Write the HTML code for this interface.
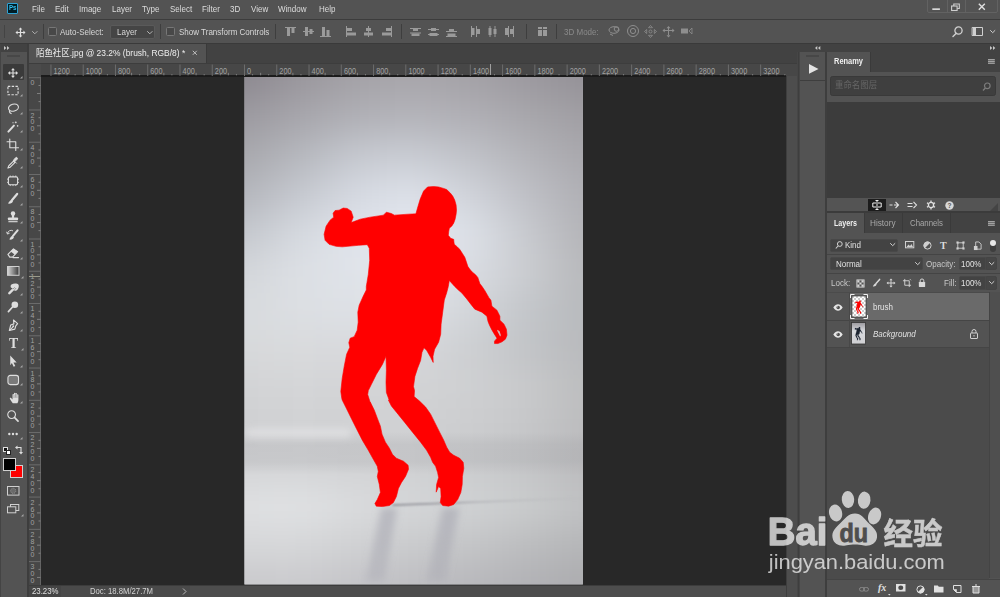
<!DOCTYPE html>
<html lang="en"><head><meta charset="utf-8"><title>Photoshop</title>
<style>
*{box-sizing:border-box;margin:0;padding:0}
html,body{width:1000px;height:597px;overflow:hidden;background:#535353}
body{font-family:"Liberation Sans","Noto Sans CJK SC",sans-serif;font-size:9px;color:#d6d6d6;position:relative}
#app{position:absolute;left:0;top:0;width:1000px;height:597px;overflow:hidden;background:#535353}
.a{position:absolute}
.t{position:absolute;white-space:nowrap;line-height:1;transform-origin:0 0}
svg{position:absolute;overflow:visible}
.ic{fill:none;stroke:#d0d0d0;stroke-width:1;stroke-linecap:round;stroke-linejoin:round}
.icf{fill:#d0d0d0;stroke:none}
.dim{opacity:.55}
</style></head>
<body><div id="app">
<div class="a" style="left:41px;top:77px;width:745px;height:508px;background:#282828;"></div>
<svg style="left:244px;top:76px;overflow:hidden" width="340" height="510" viewBox="0 0 340 510">
<defs>
<filter id="gb" filterUnits="userSpaceOnUse" x="-120" y="-100" width="580" height="710" color-interpolation-filters="sRGB"><feGaussianBlur stdDeviation="23.7 16.4"/></filter>
<filter id="bl" filterUnits="userSpaceOnUse" x="0" y="0" width="338.5" height="507.85"><feGaussianBlur stdDeviation="3.5"/></filter>
<filter id="bl1" filterUnits="userSpaceOnUse" x="0" y="0" width="338.5" height="507.85"><feGaussianBlur stdDeviation="0.9"/></filter>
<filter id="bl2" filterUnits="userSpaceOnUse" x="-20" y="0" width="378.5" height="507.85"><feGaussianBlur stdDeviation="2.5"/></filter>
<linearGradient id="band" gradientUnits="userSpaceOnUse" x1="0" y1="355" x2="0" y2="398">
<stop offset="0" stop-color="#98989c" stop-opacity="0"/>
<stop offset="0.3" stop-color="#98989c" stop-opacity="0.2"/>
<stop offset="0.7" stop-color="#98989c" stop-opacity="0.2"/>
<stop offset="1" stop-color="#98989c" stop-opacity="0"/>
</linearGradient>
<linearGradient id="edgeL" gradientUnits="userSpaceOnUse" x1="0" y1="0" x2="14" y2="0">
<stop offset="0" stop-color="#8a888c" stop-opacity="0.22"/>
<stop offset="1" stop-color="#8a888c" stop-opacity="0"/>
</linearGradient>
<linearGradient id="rf" gradientUnits="userSpaceOnUse" x1="0" y1="430" x2="0" y2="505">
<stop offset="0" stop-color="#a6a6b0" stop-opacity="0.6"/>
<stop offset="0.5" stop-color="#a6a6b0" stop-opacity="0.5"/>
<stop offset="1" stop-color="#a6a6b0" stop-opacity="0.35"/>
</linearGradient>
<linearGradient id="sh" gradientUnits="userSpaceOnUse" x1="150" y1="0" x2="338" y2="0">
<stop offset="0" stop-color="#85858c" stop-opacity="0.9"/>
<stop offset="0.3" stop-color="#8e8e95" stop-opacity="0.8"/>
<stop offset="0.45" stop-color="#a4a4aa" stop-opacity="0.6"/>
<stop offset="0.8" stop-color="#b0b0b5" stop-opacity="0.3"/>
<stop offset="1" stop-color="#b0b0b5" stop-opacity="0.1"/>
</linearGradient>
<clipPath id="imc"><rect width="338.5" height="507.85"/></clipPath>
</defs>
<g transform="translate(0.40 0.65)" clip-path="url(#imc)">
<rect width="338.5" height="507.85" fill="#cfd0d3"/>
<g filter="url(#gb)"><rect x="-141.2" y="-97.6" width="57.1" height="39.6" fill="#8c888f"/><rect x="-84.8" y="-97.6" width="57.1" height="39.6" fill="#8c888f"/><rect x="-28.2" y="-97.6" width="57.1" height="39.6" fill="#8c888f"/><rect x="28.2" y="-97.6" width="57.1" height="39.6" fill="#9a979d"/><rect x="84.8" y="-97.6" width="57.1" height="39.6" fill="#a4a2a7"/><rect x="141.2" y="-97.6" width="57.1" height="39.6" fill="#a8a6ab"/><rect x="197.8" y="-97.6" width="57.1" height="39.6" fill="#a4a2a7"/><rect x="254.2" y="-97.6" width="57.1" height="39.6" fill="#9c999f"/><rect x="310.8" y="-97.6" width="57.1" height="39.6" fill="#949197"/><rect x="367.2" y="-97.6" width="57.1" height="39.6" fill="#949197"/><rect x="423.8" y="-97.6" width="57.1" height="39.6" fill="#949197"/><rect x="-141.2" y="-58.6" width="57.1" height="39.6" fill="#8c888f"/><rect x="-84.8" y="-58.6" width="57.1" height="39.6" fill="#8c888f"/><rect x="-28.2" y="-58.6" width="57.1" height="39.6" fill="#8c888f"/><rect x="28.2" y="-58.6" width="57.1" height="39.6" fill="#9a979d"/><rect x="84.8" y="-58.6" width="57.1" height="39.6" fill="#a4a2a7"/><rect x="141.2" y="-58.6" width="57.1" height="39.6" fill="#a8a6ab"/><rect x="197.8" y="-58.6" width="57.1" height="39.6" fill="#a4a2a7"/><rect x="254.2" y="-58.6" width="57.1" height="39.6" fill="#9c999f"/><rect x="310.8" y="-58.6" width="57.1" height="39.6" fill="#949197"/><rect x="367.2" y="-58.6" width="57.1" height="39.6" fill="#949197"/><rect x="423.8" y="-58.6" width="57.1" height="39.6" fill="#949197"/><rect x="-141.2" y="-19.5" width="57.1" height="39.6" fill="#8c888f"/><rect x="-84.8" y="-19.5" width="57.1" height="39.6" fill="#8c888f"/><rect x="-28.2" y="-19.5" width="57.1" height="39.6" fill="#8c888f"/><rect x="28.2" y="-19.5" width="57.1" height="39.6" fill="#9a979d"/><rect x="84.8" y="-19.5" width="57.1" height="39.6" fill="#a4a2a7"/><rect x="141.2" y="-19.5" width="57.1" height="39.6" fill="#a8a6ab"/><rect x="197.8" y="-19.5" width="57.1" height="39.6" fill="#a4a2a7"/><rect x="254.2" y="-19.5" width="57.1" height="39.6" fill="#9c999f"/><rect x="310.8" y="-19.5" width="57.1" height="39.6" fill="#949197"/><rect x="367.2" y="-19.5" width="57.1" height="39.6" fill="#949197"/><rect x="423.8" y="-19.5" width="57.1" height="39.6" fill="#949197"/><rect x="-141.2" y="19.5" width="57.1" height="39.6" fill="#9c9aa0"/><rect x="-84.8" y="19.5" width="57.1" height="39.6" fill="#9c9aa0"/><rect x="-28.2" y="19.5" width="57.1" height="39.6" fill="#9c9aa0"/><rect x="28.2" y="19.5" width="57.1" height="39.6" fill="#a7a6ac"/><rect x="84.8" y="19.5" width="57.1" height="39.6" fill="#b0b0b6"/><rect x="141.2" y="19.5" width="57.1" height="39.6" fill="#b4b4ba"/><rect x="197.8" y="19.5" width="57.1" height="39.6" fill="#b0afb5"/><rect x="254.2" y="19.5" width="57.1" height="39.6" fill="#a8a7ac"/><rect x="310.8" y="19.5" width="57.1" height="39.6" fill="#a19fa4"/><rect x="367.2" y="19.5" width="57.1" height="39.6" fill="#a19fa4"/><rect x="423.8" y="19.5" width="57.1" height="39.6" fill="#a19fa4"/><rect x="-141.2" y="58.6" width="57.1" height="39.6" fill="#a8a8ad"/><rect x="-84.8" y="58.6" width="57.1" height="39.6" fill="#a8a8ad"/><rect x="-28.2" y="58.6" width="57.1" height="39.6" fill="#a8a8ad"/><rect x="28.2" y="58.6" width="57.1" height="39.6" fill="#b6b8be"/><rect x="84.8" y="58.6" width="57.1" height="39.6" fill="#c6c9d0"/><rect x="141.2" y="58.6" width="57.1" height="39.6" fill="#c9ccd3"/><rect x="197.8" y="58.6" width="57.1" height="39.6" fill="#c0c2c8"/><rect x="254.2" y="58.6" width="57.1" height="39.6" fill="#b4b4b9"/><rect x="310.8" y="58.6" width="57.1" height="39.6" fill="#a9a8ad"/><rect x="367.2" y="58.6" width="57.1" height="39.6" fill="#a9a8ad"/><rect x="423.8" y="58.6" width="57.1" height="39.6" fill="#a9a8ad"/><rect x="-141.2" y="97.6" width="57.1" height="39.6" fill="#b4b6bc"/><rect x="-84.8" y="97.6" width="57.1" height="39.6" fill="#b4b6bc"/><rect x="-28.2" y="97.6" width="57.1" height="39.6" fill="#b4b6bc"/><rect x="28.2" y="97.6" width="57.1" height="39.6" fill="#c6c9d0"/><rect x="84.8" y="97.6" width="57.1" height="39.6" fill="#d6dae2"/><rect x="141.2" y="97.6" width="57.1" height="39.6" fill="#dde1e9"/><rect x="197.8" y="97.6" width="57.1" height="39.6" fill="#d0d3da"/><rect x="254.2" y="97.6" width="57.1" height="39.6" fill="#bfc0c6"/><rect x="310.8" y="97.6" width="57.1" height="39.6" fill="#b0b0b5"/><rect x="367.2" y="97.6" width="57.1" height="39.6" fill="#b0b0b5"/><rect x="423.8" y="97.6" width="57.1" height="39.6" fill="#b0b0b5"/><rect x="-141.2" y="136.7" width="57.1" height="39.6" fill="#c4c7cd"/><rect x="-84.8" y="136.7" width="57.1" height="39.6" fill="#c4c7cd"/><rect x="-28.2" y="136.7" width="57.1" height="39.6" fill="#c4c7cd"/><rect x="28.2" y="136.7" width="57.1" height="39.6" fill="#d6dae0"/><rect x="84.8" y="136.7" width="57.1" height="39.6" fill="#e0e4ec"/><rect x="141.2" y="136.7" width="57.1" height="39.6" fill="#e4e8f0"/><rect x="197.8" y="136.7" width="57.1" height="39.6" fill="#dde1e8"/><rect x="254.2" y="136.7" width="57.1" height="39.6" fill="#c8cacf"/><rect x="310.8" y="136.7" width="57.1" height="39.6" fill="#b4b4b8"/><rect x="367.2" y="136.7" width="57.1" height="39.6" fill="#b4b4b8"/><rect x="423.8" y="136.7" width="57.1" height="39.6" fill="#b4b4b8"/><rect x="-141.2" y="175.7" width="57.1" height="39.6" fill="#d3d6da"/><rect x="-84.8" y="175.7" width="57.1" height="39.6" fill="#d3d6da"/><rect x="-28.2" y="175.7" width="57.1" height="39.6" fill="#d3d6da"/><rect x="28.2" y="175.7" width="57.1" height="39.6" fill="#dde0e5"/><rect x="84.8" y="175.7" width="57.1" height="39.6" fill="#e0e4ea"/><rect x="141.2" y="175.7" width="57.1" height="39.6" fill="#e2e6ec"/><rect x="197.8" y="175.7" width="57.1" height="39.6" fill="#d9dce2"/><rect x="254.2" y="175.7" width="57.1" height="39.6" fill="#cbcdd1"/><rect x="310.8" y="175.7" width="57.1" height="39.6" fill="#b8b9bc"/><rect x="367.2" y="175.7" width="57.1" height="39.6" fill="#b8b9bc"/><rect x="423.8" y="175.7" width="57.1" height="39.6" fill="#b8b9bc"/><rect x="-141.2" y="214.8" width="57.1" height="39.6" fill="#d8dbde"/><rect x="-84.8" y="214.8" width="57.1" height="39.6" fill="#d8dbde"/><rect x="-28.2" y="214.8" width="57.1" height="39.6" fill="#d8dbde"/><rect x="28.2" y="214.8" width="57.1" height="39.6" fill="#dcdfe3"/><rect x="84.8" y="214.8" width="57.1" height="39.6" fill="#dee1e6"/><rect x="141.2" y="214.8" width="57.1" height="39.6" fill="#dde0e5"/><rect x="197.8" y="214.8" width="57.1" height="39.6" fill="#d3d6da"/><rect x="254.2" y="214.8" width="57.1" height="39.6" fill="#c3c6ca"/><rect x="310.8" y="214.8" width="57.1" height="39.6" fill="#b8babd"/><rect x="367.2" y="214.8" width="57.1" height="39.6" fill="#b8babd"/><rect x="423.8" y="214.8" width="57.1" height="39.6" fill="#b8babd"/><rect x="-141.2" y="253.8" width="57.1" height="39.6" fill="#d7d9db"/><rect x="-84.8" y="253.8" width="57.1" height="39.6" fill="#d7d9db"/><rect x="-28.2" y="253.8" width="57.1" height="39.6" fill="#d7d9db"/><rect x="28.2" y="253.8" width="57.1" height="39.6" fill="#d9dadc"/><rect x="84.8" y="253.8" width="57.1" height="39.6" fill="#d8d9dc"/><rect x="141.2" y="253.8" width="57.1" height="39.6" fill="#d6d7da"/><rect x="197.8" y="253.8" width="57.1" height="39.6" fill="#cdcfd2"/><rect x="254.2" y="253.8" width="57.1" height="39.6" fill="#c2c4c7"/><rect x="310.8" y="253.8" width="57.1" height="39.6" fill="#b9babd"/><rect x="367.2" y="253.8" width="57.1" height="39.6" fill="#b9babd"/><rect x="423.8" y="253.8" width="57.1" height="39.6" fill="#b9babd"/><rect x="-141.2" y="292.9" width="57.1" height="39.6" fill="#d2d3d5"/><rect x="-84.8" y="292.9" width="57.1" height="39.6" fill="#d2d3d5"/><rect x="-28.2" y="292.9" width="57.1" height="39.6" fill="#d2d3d5"/><rect x="28.2" y="292.9" width="57.1" height="39.6" fill="#d4d5d7"/><rect x="84.8" y="292.9" width="57.1" height="39.6" fill="#d3d4d6"/><rect x="141.2" y="292.9" width="57.1" height="39.6" fill="#d2d3d5"/><rect x="197.8" y="292.9" width="57.1" height="39.6" fill="#cfd0d2"/><rect x="254.2" y="292.9" width="57.1" height="39.6" fill="#c9cacc"/><rect x="310.8" y="292.9" width="57.1" height="39.6" fill="#bdbebf"/><rect x="367.2" y="292.9" width="57.1" height="39.6" fill="#bdbebf"/><rect x="423.8" y="292.9" width="57.1" height="39.6" fill="#bdbebf"/><rect x="-141.2" y="331.9" width="57.1" height="39.6" fill="#cfd0d2"/><rect x="-84.8" y="331.9" width="57.1" height="39.6" fill="#cfd0d2"/><rect x="-28.2" y="331.9" width="57.1" height="39.6" fill="#cfd0d2"/><rect x="28.2" y="331.9" width="57.1" height="39.6" fill="#d1d2d4"/><rect x="84.8" y="331.9" width="57.1" height="39.6" fill="#d0d1d3"/><rect x="141.2" y="331.9" width="57.1" height="39.6" fill="#d0d1d3"/><rect x="197.8" y="331.9" width="57.1" height="39.6" fill="#cccdcf"/><rect x="254.2" y="331.9" width="57.1" height="39.6" fill="#c6c7c9"/><rect x="310.8" y="331.9" width="57.1" height="39.6" fill="#bcbcbe"/><rect x="367.2" y="331.9" width="57.1" height="39.6" fill="#bcbcbe"/><rect x="423.8" y="331.9" width="57.1" height="39.6" fill="#bcbcbe"/><rect x="-141.2" y="371.0" width="57.1" height="39.6" fill="#d4d5d7"/><rect x="-84.8" y="371.0" width="57.1" height="39.6" fill="#d4d5d7"/><rect x="-28.2" y="371.0" width="57.1" height="39.6" fill="#d4d5d7"/><rect x="28.2" y="371.0" width="57.1" height="39.6" fill="#d4d5d7"/><rect x="84.8" y="371.0" width="57.1" height="39.6" fill="#d2d3d5"/><rect x="141.2" y="371.0" width="57.1" height="39.6" fill="#d0d1d3"/><rect x="197.8" y="371.0" width="57.1" height="39.6" fill="#cbccce"/><rect x="254.2" y="371.0" width="57.1" height="39.6" fill="#c5c6c8"/><rect x="310.8" y="371.0" width="57.1" height="39.6" fill="#bbbbbd"/><rect x="367.2" y="371.0" width="57.1" height="39.6" fill="#bbbbbd"/><rect x="423.8" y="371.0" width="57.1" height="39.6" fill="#bbbbbd"/><rect x="-141.2" y="410.0" width="57.1" height="39.6" fill="#dfe0e2"/><rect x="-84.8" y="410.0" width="57.1" height="39.6" fill="#dfe0e2"/><rect x="-28.2" y="410.0" width="57.1" height="39.6" fill="#dfe0e2"/><rect x="28.2" y="410.0" width="57.1" height="39.6" fill="#e0e2e4"/><rect x="84.8" y="410.0" width="57.1" height="39.6" fill="#dadbdd"/><rect x="141.2" y="410.0" width="57.1" height="39.6" fill="#d4d6d8"/><rect x="197.8" y="410.0" width="57.1" height="39.6" fill="#d0d2d4"/><rect x="254.2" y="410.0" width="57.1" height="39.6" fill="#cacccd"/><rect x="310.8" y="410.0" width="57.1" height="39.6" fill="#c0c1c3"/><rect x="367.2" y="410.0" width="57.1" height="39.6" fill="#c0c1c3"/><rect x="423.8" y="410.0" width="57.1" height="39.6" fill="#c0c1c3"/><rect x="-141.2" y="449.1" width="57.1" height="39.6" fill="#d6d7d9"/><rect x="-84.8" y="449.1" width="57.1" height="39.6" fill="#d6d7d9"/><rect x="-28.2" y="449.1" width="57.1" height="39.6" fill="#d6d7d9"/><rect x="28.2" y="449.1" width="57.1" height="39.6" fill="#d6d7d9"/><rect x="84.8" y="449.1" width="57.1" height="39.6" fill="#d0d1d3"/><rect x="141.2" y="449.1" width="57.1" height="39.6" fill="#cacbcd"/><rect x="197.8" y="449.1" width="57.1" height="39.6" fill="#c4c5c7"/><rect x="254.2" y="449.1" width="57.1" height="39.6" fill="#bcbdbf"/><rect x="310.8" y="449.1" width="57.1" height="39.6" fill="#b5b6b8"/><rect x="367.2" y="449.1" width="57.1" height="39.6" fill="#b5b6b8"/><rect x="423.8" y="449.1" width="57.1" height="39.6" fill="#b5b6b8"/><rect x="-141.2" y="488.1" width="57.1" height="39.6" fill="#c9c9cc"/><rect x="-84.8" y="488.1" width="57.1" height="39.6" fill="#c9c9cc"/><rect x="-28.2" y="488.1" width="57.1" height="39.6" fill="#c9c9cc"/><rect x="28.2" y="488.1" width="57.1" height="39.6" fill="#cacacd"/><rect x="84.8" y="488.1" width="57.1" height="39.6" fill="#c4c4c8"/><rect x="141.2" y="488.1" width="57.1" height="39.6" fill="#bebec2"/><rect x="197.8" y="488.1" width="57.1" height="39.6" fill="#b8b8bc"/><rect x="254.2" y="488.1" width="57.1" height="39.6" fill="#b2b2b6"/><rect x="310.8" y="488.1" width="57.1" height="39.6" fill="#acacaf"/><rect x="367.2" y="488.1" width="57.1" height="39.6" fill="#acacaf"/><rect x="423.8" y="488.1" width="57.1" height="39.6" fill="#acacaf"/><rect x="-141.2" y="527.2" width="57.1" height="39.6" fill="#c9c9cc"/><rect x="-84.8" y="527.2" width="57.1" height="39.6" fill="#c9c9cc"/><rect x="-28.2" y="527.2" width="57.1" height="39.6" fill="#c9c9cc"/><rect x="28.2" y="527.2" width="57.1" height="39.6" fill="#cacacd"/><rect x="84.8" y="527.2" width="57.1" height="39.6" fill="#c4c4c8"/><rect x="141.2" y="527.2" width="57.1" height="39.6" fill="#bebec2"/><rect x="197.8" y="527.2" width="57.1" height="39.6" fill="#b8b8bc"/><rect x="254.2" y="527.2" width="57.1" height="39.6" fill="#b2b2b6"/><rect x="310.8" y="527.2" width="57.1" height="39.6" fill="#acacaf"/><rect x="367.2" y="527.2" width="57.1" height="39.6" fill="#acacaf"/><rect x="423.8" y="527.2" width="57.1" height="39.6" fill="#acacaf"/><rect x="-141.2" y="566.2" width="57.1" height="39.6" fill="#c9c9cc"/><rect x="-84.8" y="566.2" width="57.1" height="39.6" fill="#c9c9cc"/><rect x="-28.2" y="566.2" width="57.1" height="39.6" fill="#c9c9cc"/><rect x="28.2" y="566.2" width="57.1" height="39.6" fill="#cacacd"/><rect x="84.8" y="566.2" width="57.1" height="39.6" fill="#c4c4c8"/><rect x="141.2" y="566.2" width="57.1" height="39.6" fill="#bebec2"/><rect x="197.8" y="566.2" width="57.1" height="39.6" fill="#b8b8bc"/><rect x="254.2" y="566.2" width="57.1" height="39.6" fill="#b2b2b6"/><rect x="310.8" y="566.2" width="57.1" height="39.6" fill="#acacaf"/><rect x="367.2" y="566.2" width="57.1" height="39.6" fill="#acacaf"/><rect x="423.8" y="566.2" width="57.1" height="39.6" fill="#acacaf"/></g>
<rect width="338.5" height="507.85" fill="url(#band)"/>
<rect x="2" y="352" width="104" height="9" fill="#e6e6e8" opacity="0.6" filter="url(#bl)"/>
<path d="M148 428.500L338 421.500" stroke="url(#sh)" stroke-width="1.600" filter="url(#bl1)" fill="none"/>
<path d="M137 431h16l-13 74h-19z" fill="url(#rf)" filter="url(#bl)"/>
<path d="M198 431h17l-14 74h-19z" fill="url(#rf)" filter="url(#bl)"/>
<path d="M183.2,110.3 L189.2,109.9 L194.2,110.3 L199.3,111.8 L202.3,112.9 L205.9,116.4 L208.3,119.4 L210.3,123.4 L211.7,128.4 L212.1,133.5 L211.7,137.5 L210.7,142.5 L209.3,146.5 L207.3,149.5 L204.9,151.5 L204.3,155.2 L203.9,158.7 L206.3,161.7 L209.3,162.7 L209.5,165.2 L209.9,167.7 L212.7,170.0 L215.3,172.7 L218.0,176.8 L220.4,180.7 L222.0,185.3 L223.4,189.7 L225.8,193.2 L228.4,195.8 L231.2,198.2 L233.4,200.8 L234.4,203.8 L235.4,206.8 L237.9,210.2 L240.5,214.0 L242.5,217.5 L244.5,221.0 L246.5,223.5 L247.5,229.5 L252.5,233.5 L255.5,239.5 L255.5,243.5 L259.6,247.5 L262.0,252.5 L262.6,258.5 L261.0,262.5 L257.6,265.2 L253.5,266.9 L250.1,266.9 L250.1,264.5 L252.6,261.5 L250.6,258.5 L247.6,253.5 L245.1,248.5 L243.6,244.8 L242.5,239.5 L237.5,235.5 L230.4,232.5 L226.4,227.5 L222.4,222.3 L217.4,216.3 L213.9,213.3 L210.3,209.8 L204.9,203.8 L203.9,209.8 L202.3,216.0 L199.9,223.3 L198.3,235.5 L196.7,247.5 L196.3,257.5 L194.2,265.6 L190.2,272.6 L188.6,279.6 L188.8,285.8 L186.2,280.6 L182.2,273.6 L179.6,271.2 L177.6,275.6 L176.2,283.8 L173.1,291.8 L170.5,299.8 L169.1,309.9 L170.1,313.9 L169.7,319.9 L175.1,324.4 L181.2,330.4 L186.2,337.5 L190.2,345.5 L195.2,355.5 L199.3,363.5 L202.3,370.5 L205.3,375.6 L209.3,378.6 L215.3,381.6 L218.8,385.6 L219.4,391.6 L218.0,399.8 L217.8,407.8 L216.4,415.9 L213.3,422.9 L209.3,427.9 L204.3,429.5 L198.3,428.9 L195.9,425.9 L196.7,419.9 L196.3,411.8 L194.2,409.8 L191.8,415.5 L192.2,407.8 L194.2,400.8 L193.2,395.8 L191.2,389.6 L188.2,385.6 L186.2,380.6 L182.2,373.6 L176.2,365.5 L168.1,355.5 L160.1,345.5 L152.0,335.5 L147.0,329.4 L144.0,323.4 L145.0,324.0 L142.0,315.9 L141.6,305.9 L142.0,293.8 L141.6,279.6 L138.0,287.8 L131.9,297.8 L126.9,307.9 L123.9,313.9 L123.3,317.9 L125.9,326.0 L125.9,325.4 L129.9,333.5 L132.9,341.5 L136.0,349.5 L137.6,357.5 L141.0,365.5 L145.0,371.5 L148.0,377.6 L152.0,381.6 L159.1,384.6 L163.7,388.6 L164.1,392.6 L161.1,399.8 L157.1,405.8 L154.0,411.8 L152.0,419.9 L149.0,425.9 L145.0,428.9 L138.0,429.9 L131.9,429.5 L130.5,426.9 L132.9,422.9 L136.0,415.9 L134.9,407.8 L132.9,399.8 L133.9,394.8 L132.9,389.6 L128.9,382.6 L123.9,373.6 L117.9,363.5 L111.8,351.5 L106.8,341.5 L101.8,331.4 L97.8,323.4 L97.4,321.9 L96.4,314.9 L97.8,301.8 L99.8,289.8 L102.2,277.6 L105.4,270.6 L104.4,266.0 L105.8,261.5 L109.8,260.0 L112.8,253.5 L113.8,245.5 L113.4,235.5 L114.8,228.5 L118.9,219.3 L121.9,213.3 L121.9,209.8 L123.9,197.8 L125.3,183.7 L124.9,171.7 L122.9,168.0 L113.8,168.7 L97.8,170.2 L91.7,169.7 L84.7,167.7 L80.7,163.7 L79.7,157.7 L81.7,149.5 L85.7,143.5 L89.3,140.5 L88.7,136.5 L90.7,133.9 L94.7,133.5 L98.8,131.4 L102.8,131.8 L106.8,134.5 L108.8,140.5 L106.8,145.9 L108.8,145.2 L115.9,142.5 L125.9,140.5 L139.0,138.5 L142.0,135.5 L147.0,136.9 L150.0,138.5 L164.1,137.5 L171.5,137.2 L173.1,131.4 L175.8,122.4 L179.2,114.4Z" fill="#ff0000" stroke="#ff0000" stroke-width="0.6" stroke-linejoin="round"/>
<path d="M253.1,253.0 L255.2,254.5 L256.5,258.5 L255.7,259.8 L254.2,256.8 L252.8,254.2Z" fill="#d0d3d8" opacity="0.85"/>
</g>
</svg>
<div class="a" style="left:0px;top:0px;width:1000px;height:19px;background:#535353;"></div>
<div class="a" style="left:0px;top:19px;width:1000px;height:1px;background:#3c3c3c;"></div>
<div class="a" style="left:7px;top:3px;width:11px;height:11px;background:#001d26;border:1px solid #2fa3d6;border-radius:1px"></div>
<span class="t" style="left:9.3px;top:5.3px;font-size:6.5px;color:#35c0f0;transform:scaleX(0.950);font-weight:bold">Ps</span>
<span class="t" style="left:32px;top:4.5px;font-size:9px;color:#dcdcdc;transform:scaleX(0.890);">File</span>
<span class="t" style="left:55px;top:4.5px;font-size:9px;color:#dcdcdc;transform:scaleX(0.890);">Edit</span>
<span class="t" style="left:79px;top:4.5px;font-size:9px;color:#dcdcdc;transform:scaleX(0.890);">Image</span>
<span class="t" style="left:112px;top:4.5px;font-size:9px;color:#dcdcdc;transform:scaleX(0.890);">Layer</span>
<span class="t" style="left:142px;top:4.5px;font-size:9px;color:#dcdcdc;transform:scaleX(0.890);">Type</span>
<span class="t" style="left:169.5px;top:4.5px;font-size:9px;color:#dcdcdc;transform:scaleX(0.890);">Select</span>
<span class="t" style="left:201.5px;top:4.5px;font-size:9px;color:#dcdcdc;transform:scaleX(0.890);">Filter</span>
<span class="t" style="left:230px;top:4.5px;font-size:9px;color:#dcdcdc;transform:scaleX(0.890);">3D</span>
<span class="t" style="left:250.5px;top:4.5px;font-size:9px;color:#dcdcdc;transform:scaleX(0.890);">View</span>
<span class="t" style="left:278px;top:4.5px;font-size:9px;color:#dcdcdc;transform:scaleX(0.890);">Window</span>
<span class="t" style="left:318.5px;top:4.5px;font-size:9px;color:#dcdcdc;transform:scaleX(0.890);">Help</span>
<div class="a" style="left:926.5px;top:-2px;width:71.5px;height:14.5px;background:transparent;border:1px solid #626262;border-radius:2px"></div>
<div class="a" style="left:946.5px;top:0px;width:1px;height:12px;background:#626262;"></div>
<div class="a" style="left:965px;top:0px;width:1px;height:12px;background:#626262;"></div>
<svg style="left:932px;top:7.5px;" width="9" height="3" viewBox="0 0 9 3"><rect x="0.300" y="0.300" width="7.600" height="1.700" fill="#d8d8d8"/></svg>
<svg style="left:951px;top:3px;" width="10" height="9" viewBox="0 0 10 9"><rect x="0.600" y="3" width="5.500" height="4.500" fill="none" stroke="#cfcfcf" stroke-width="1.100"/><path d="M2.800 3V1h5.500v4.500H6.200" fill="none" stroke="#cfcfcf" stroke-width="1.100"/></svg>
<svg style="left:977.5px;top:2.5px;" width="8" height="8" viewBox="0 0 8 8"><path d="M0.800 0.800l6 6M6.800 0.800l-6 6" fill="none" stroke="#e0e0e0" stroke-width="1.400"/></svg>
<div class="a" style="left:0px;top:20px;width:1000px;height:23px;background:#535353;"></div>
<div class="a" style="left:0px;top:43px;width:1000px;height:1px;background:#3a3a3a;"></div>
<div class="a" style="left:4px;top:25px;width:1px;height:13px;background:#444;"></div>
<svg style="left:14.5px;top:26.5px;" width="11" height="11" viewBox="0 0 11 11"><path d="M5.5 0.5L3.6 2.6h1.3v2.3H2.6V3.6L0.5 5.5l2.1 1.9V6.1h2.3v2.3H3.6L5.5 10.5l1.9-2.1H6.1V6.1h2.3v1.3l2.1-1.9-2.1-1.9v1.3H6.1V2.6h1.3z" fill="#e0e0e0"/></svg>
<svg style="left:31.5px;top:30.5px;" width="6" height="4" viewBox="0 0 6 4"><path d="M0.5 0.5l2.3 2.3 2.3-2.3" class="ic" style="stroke:#b0b0b0"/></svg>
<div class="a" style="left:43px;top:24px;width:1px;height:15px;background:#3e3e3e;"></div>
<div class="a" style="left:48px;top:27px;width:9px;height:9px;background:#484848;border:1px solid #777;border-radius:1.5px"></div>
<span class="t" style="left:60px;top:27.5px;font-size:9px;color:#d8d8d8;transform:scaleX(0.890);">Auto-Select:</span>
<div class="a" style="left:110.3px;top:25px;width:44.5px;height:14px;background:#454545;border:1px solid #5a5a5a;border-radius:2px"></div>
<div class="a" style="left:160px;top:24px;width:1px;height:15px;background:#3e3e3e;"></div>
<span class="t" style="left:117px;top:27.5px;font-size:9px;color:#d8d8d8;transform:scaleX(0.890);">Layer</span>
<svg style="left:146.5px;top:30.5px;" width="6" height="4" viewBox="0 0 6 4"><path d="M0.5 0.5l2.3 2.3 2.3-2.3" class="ic" style="stroke:#b8b8b8"/></svg>
<div class="a" style="left:166px;top:27px;width:9px;height:9px;background:#484848;border:1px solid #777;border-radius:1.5px"></div>
<span class="t" style="left:179px;top:27.5px;font-size:9px;color:#d8d8d8;transform:scaleX(0.890);">Show Transform Controls</span>
<div class="a" style="left:275px;top:24px;width:1px;height:15px;background:#3e3e3e;"></div>
<div class="a" style="left:401px;top:24px;width:1px;height:15px;background:#3e3e3e;"></div>
<div class="a" style="left:526px;top:24px;width:1px;height:15px;background:#3e3e3e;"></div>
<div class="a" style="left:556px;top:24px;width:1px;height:15px;background:#3e3e3e;"></div>
<svg style="left:285px;top:25.7px;" width="12" height="12" viewBox="0 0 12 12"><rect x="0" y="1" width="11" height="1" fill="#9a9a9a"/><rect x="2" y="2" width="3" height="8" fill="#9a9a9a"/><rect x="6.5" y="2" width="3" height="5" fill="#9a9a9a"/></svg>
<svg style="left:303px;top:25.7px;" width="12" height="12" viewBox="0 0 12 12"><rect x="0" y="5" width="11" height="1" fill="#9a9a9a"/><rect x="2" y="1" width="3" height="9" fill="#9a9a9a"/><rect x="6.5" y="3" width="3" height="5" fill="#9a9a9a"/></svg>
<svg style="left:320px;top:25.7px;" width="12" height="12" viewBox="0 0 12 12"><rect x="0" y="10" width="11" height="1" fill="#9a9a9a"/><rect x="2" y="1" width="3" height="9" fill="#9a9a9a"/><rect x="6.5" y="4" width="3" height="6" fill="#9a9a9a"/></svg>
<svg style="left:346px;top:25.7px;" width="12" height="12" viewBox="0 0 12 12"><rect x="0" y="0" width="1" height="11" fill="#9a9a9a"/><rect x="1" y="2" width="5" height="3" fill="#9a9a9a"/><rect x="1" y="6.5" width="9" height="3" fill="#9a9a9a"/></svg>
<svg style="left:363px;top:25.7px;" width="12" height="12" viewBox="0 0 12 12"><rect x="5" y="0" width="1" height="11" fill="#9a9a9a"/><rect x="3" y="2" width="5" height="3" fill="#9a9a9a"/><rect x="1" y="6.5" width="9" height="3" fill="#9a9a9a"/></svg>
<svg style="left:381px;top:25.7px;" width="12" height="12" viewBox="0 0 12 12"><rect x="10" y="0" width="1" height="11" fill="#9a9a9a"/><rect x="5" y="2" width="5" height="3" fill="#9a9a9a"/><rect x="1" y="6.5" width="9" height="3" fill="#9a9a9a"/></svg>
<svg style="left:410px;top:25.7px;" width="12" height="12" viewBox="0 0 12 12"><rect x="0" y="2" width="11" height="1" fill="#9a9a9a"/><rect x="3" y="3" width="5" height="2" fill="#9a9a9a"/><rect x="0" y="6.5" width="11" height="1" fill="#9a9a9a"/><rect x="1.5" y="7.5" width="8" height="2.5" fill="#9a9a9a"/></svg>
<svg style="left:428px;top:25.7px;" width="12" height="12" viewBox="0 0 12 12"><rect x="0" y="3" width="11" height="1" fill="#9a9a9a"/><rect x="3" y="2" width="5" height="3" fill="#9a9a9a"/><rect x="0" y="8" width="11" height="1" fill="#9a9a9a"/><rect x="1.5" y="7" width="8" height="3" fill="#9a9a9a"/></svg>
<svg style="left:446px;top:25.7px;" width="12" height="12" viewBox="0 0 12 12"><rect x="0" y="5" width="11" height="1" fill="#9a9a9a"/><rect x="3" y="3" width="5" height="2" fill="#9a9a9a"/><rect x="0" y="10" width="11" height="1" fill="#9a9a9a"/><rect x="1.5" y="7.5" width="8" height="2.5" fill="#9a9a9a"/></svg>
<svg style="left:470px;top:25.7px;" width="12" height="12" viewBox="0 0 12 12"><rect x="1" y="0" width="1" height="11" fill="#9a9a9a"/><rect x="2" y="2" width="2.5" height="7" fill="#9a9a9a"/><rect x="6" y="0" width="1" height="11" fill="#9a9a9a"/><rect x="7" y="3" width="3" height="5" fill="#9a9a9a"/></svg>
<svg style="left:487px;top:25.7px;" width="12" height="12" viewBox="0 0 12 12"><rect x="2.5" y="0" width="1" height="11" fill="#9a9a9a"/><rect x="1.5" y="2" width="3" height="7" fill="#9a9a9a"/><rect x="7.5" y="0" width="1" height="11" fill="#9a9a9a"/><rect x="6.5" y="3" width="3" height="5" fill="#9a9a9a"/></svg>
<svg style="left:504px;top:25.7px;" width="12" height="12" viewBox="0 0 12 12"><rect x="4" y="0" width="1" height="11" fill="#9a9a9a"/><rect x="1" y="2" width="3" height="7" fill="#9a9a9a"/><rect x="9" y="0" width="1" height="11" fill="#9a9a9a"/><rect x="6" y="3" width="3" height="5" fill="#9a9a9a"/></svg>
<svg style="left:538px;top:25.7px;" width="12" height="12" viewBox="0 0 12 12"><rect x="0" y="1" width="4" height="2" fill="#9a9a9a"/><rect x="5" y="1" width="4" height="2" fill="#9a9a9a"/><rect x="0" y="4" width="4" height="6" fill="#9a9a9a"/><rect x="5" y="4" width="4" height="6" fill="#9a9a9a"/></svg>
<span class="t" style="left:564px;top:27.5px;font-size:9px;color:#8a8a8a;transform:scaleX(0.890);">3D Mode:</span>
<svg style="left:608px;top:25px;" width="13" height="12" viewBox="0 0 13 12"><ellipse cx="6" cy="5" rx="5" ry="3.3" fill="none" stroke="#8e8e8e"/><circle cx="8.5" cy="4" r="2.3" fill="none" stroke="#8e8e8e"/><path d="M2 9l3 1.5" stroke="#8e8e8e"/></svg>
<svg style="left:626px;top:24px;" width="14" height="14" viewBox="0 0 14 14"><circle cx="7" cy="7" r="5.5" fill="none" stroke="#8e8e8e"/><circle cx="7" cy="7" r="2.6" fill="none" stroke="#8e8e8e"/></svg>
<svg style="left:644px;top:25px;" width="13" height="13" viewBox="0 0 13 13"><path d="M6.5 0.5l2 2.2h-4zM6.5 12.5l2-2.2h-4zM0.5 6.5l2.2-2v4zM12.5 6.5l-2.2-2v4z" fill="none" stroke="#8e8e8e" stroke-width=".8"/><circle cx="6.5" cy="6.5" r="1.5" fill="none" stroke="#8e8e8e" stroke-width=".8"/></svg>
<svg style="left:662px;top:25px;" width="13" height="13" viewBox="0 0 13 13"><path d="M6.5 1l2 2.2h-4zM6.5 12.5l2-2.2h-4zM0.5 5.5l2.2-2v4zM12.5 5.5l-2.2-2v4z" fill="#8e8e8e"/><path d="M6.5 3v7M2 5.5h9" stroke="#8e8e8e"/></svg>
<svg style="left:681px;top:27px;" width="13" height="9" viewBox="0 0 13 9"><rect x="0" y="1.5" width="7" height="5" fill="#8e8e8e"/><path d="M8 4l3-3v6z" fill="none" stroke="#8e8e8e" stroke-width=".8"/></svg>
<svg style="left:952px;top:26px;" width="12" height="12" viewBox="0 0 12 12"><circle cx="6.5" cy="4.5" r="3.6" class="ic" style="stroke-width:1.3"/><path d="M4 7.5L1 10.5" class="ic" style="stroke-width:1.5"/></svg>
<svg style="left:972px;top:27px;" width="12" height="10" viewBox="0 0 12 10"><rect x="0.5" y="0.5" width="10" height="8" class="ic"/><rect x="1" y="1" width="3" height="7" class="icf"/></svg>
<svg style="left:990px;top:30px;" width="6" height="4" viewBox="0 0 6 4"><path d="M0.5 0.5l2.2 2.2 2.2-2.2" class="ic"/></svg>
<div class="a" style="left:0px;top:44px;width:28px;height:553px;background:#535353;"></div>
<div class="a" style="left:0px;top:44px;width:1px;height:553px;background:#444;"></div>
<div class="a" style="left:27px;top:44px;width:2px;height:553px;background:#3d3d3d;"></div>
<div class="a" style="left:1px;top:44px;width:26px;height:8px;background:#424242;"></div>
<svg style="left:4px;top:46px;" width="6" height="4" viewBox="0 0 6 4"><path d="M0 0l2.3 2-2.3 2zM3 0l2.3 2-2.3 2z" fill="#c8c8c8"/></svg>
<div class="a" style="left:7px;top:55px;width:13px;height:2px;background:#474747;"></div>
<div class="a" style="left:3px;top:64px;width:21px;height:16px;background:#3a3a3a;border-radius:1px"></div>
<svg style="left:5px;top:65.6px" width="16" height="14" viewBox="0 0 16 14"><g transform="translate(8 7) scale(0.92) translate(-8 -7)"><g transform="translate(2.5,1.5)"><path d="M5.5 0L3.4 2.4h1.5v2.5H2.4V3.4L0 5.5l2.4 2.1V6.1h2.5v2.5H3.4L5.5 11l2.1-2.4H6.1V6.1h2.5v1.5L11 5.5 8.600 3.4v1.500H6.100V2.400h1.500z" fill="#dedede"/></g></g></svg>
<svg style="left:19.600px;top:76.2px" width="3" height="3" viewBox="0 0 3 3"><path d="M2.500 0v2.500H0z" fill="#a8a8a8"/></svg>
<svg style="left:5px;top:83.6px" width="16" height="14" viewBox="0 0 16 14"><g transform="translate(8 7) scale(0.92) translate(-8 -7)"><rect x="2.500" y="2" width="11" height="9" fill="none" stroke="#dedede" stroke-width="1.200" stroke-dasharray="2.600 1.500"/></g></svg>
<svg style="left:19.600px;top:94.2px" width="3" height="3" viewBox="0 0 3 3"><path d="M2.500 0v2.500H0z" fill="#a8a8a8"/></svg>
<svg style="left:5px;top:101.7px" width="16" height="14" viewBox="0 0 16 14"><g transform="translate(8 7) scale(0.92) translate(-8 -7)"><ellipse cx="8.500" cy="5.500" rx="5.500" ry="3.800" transform="rotate(-15 8.500 5.500)" fill="none" stroke="#dedede" stroke-width="1.2" stroke-linecap="round" stroke-linejoin="round"/><path d="M4.500 8.500c-1 1.500 0 3 1.500 3.500" fill="none" stroke="#dedede" stroke-width="1.2" stroke-linecap="round" stroke-linejoin="round"/></g></svg>
<svg style="left:19.600px;top:112.3px" width="3" height="3" viewBox="0 0 3 3"><path d="M2.500 0v2.500H0z" fill="#a8a8a8"/></svg>
<svg style="left:5px;top:119.8px" width="16" height="14" viewBox="0 0 16 14"><g transform="translate(8 7) scale(0.92) translate(-8 -7)"><path d="M3 12l6-6.500" fill="none" stroke="#dedede" stroke-width="2.200" stroke-linecap="round"/><path d="M11 1v2M10 2h2M13 5v1.600M12.200 5.800h1.600M8 1.500v1.500" fill="none" stroke="#dedede" stroke-width=".9"/></g></svg>
<svg style="left:19.600px;top:130.3px" width="3" height="3" viewBox="0 0 3 3"><path d="M2.500 0v2.500H0z" fill="#a8a8a8"/></svg>
<svg style="left:5px;top:137.8px" width="16" height="14" viewBox="0 0 16 14"><g transform="translate(8 7) scale(0.92) translate(-8 -7)"><path d="M4.500 0.500v9.500h9.500M1.500 3.500h9.500v9.500" fill="none" stroke="#dedede" stroke-width="1.2" stroke-linecap="round" stroke-linejoin="round"/></g></svg>
<svg style="left:19.600px;top:148.4px" width="3" height="3" viewBox="0 0 3 3"><path d="M2.500 0v2.500H0z" fill="#a8a8a8"/></svg>
<svg style="left:5px;top:155.8px" width="16" height="14" viewBox="0 0 16 14"><g transform="translate(8 7) scale(0.92) translate(-8 -7)"><path d="M2.500 12.500l1-2.500 5-5 1.500 1.500-5 5z" fill="none" stroke="#dedede" stroke-width="1.2" stroke-linecap="round" stroke-linejoin="round"/><path d="M8.500 4l3.500 3.500M10 5.500l2.500-2.500a1.200 1.200 0 0 0-1.700-1.700L8.500 4z" fill="#dedede" stroke="#dedede" stroke-width="1"/></g></svg>
<svg style="left:19.600px;top:166.4px" width="3" height="3" viewBox="0 0 3 3"><path d="M2.500 0v2.500H0z" fill="#a8a8a8"/></svg>
<svg style="left:5px;top:173.9px" width="16" height="14" viewBox="0 0 16 14"><g transform="translate(8 7) scale(0.92) translate(-8 -7)"><rect x="3" y="2.500" width="10" height="8.500" rx="1.500" fill="none" stroke="#dedede" stroke-width="1.2" stroke-linecap="round" stroke-linejoin="round"/><path d="M5 1v1.500M8 1v1.500M11 1v1.500M5 11v1.500M8 11v1.500M11 11v1.500M1.500 5h1.500M1.500 8.500h1.500M13 5h1.500M13 8.500h1.500" fill="none" stroke="#dedede" stroke-width=".9"/></g></svg>
<svg style="left:19.600px;top:184.5px" width="3" height="3" viewBox="0 0 3 3"><path d="M2.500 0v2.500H0z" fill="#a8a8a8"/></svg>
<svg style="left:5px;top:191.9px" width="16" height="14" viewBox="0 0 16 14"><g transform="translate(8 7) scale(0.92) translate(-8 -7)"><path d="M12.500 1.500L7 8" fill="none" stroke="#dedede" stroke-width="2.400" stroke-linecap="round"/><path d="M6.500 8c-2 0-2.500 2-4 4 2.500.5 5-.5 5.500-2.500z" fill="#dedede"/></g></svg>
<svg style="left:19.600px;top:202.5px" width="3" height="3" viewBox="0 0 3 3"><path d="M2.500 0v2.500H0z" fill="#a8a8a8"/></svg>
<svg style="left:5px;top:210.0px" width="16" height="14" viewBox="0 0 16 14"><g transform="translate(8 7) scale(0.92) translate(-8 -7)"><circle cx="8" cy="3.200" r="2.400" fill="#dedede"/><rect x="6.800" y="4" width="2.400" height="4" fill="#dedede"/><rect x="2.500" y="7.500" width="11" height="3" rx=".8" fill="#dedede"/><rect x="3" y="11.500" width="10" height="1.200" fill="#dedede"/></g></svg>
<svg style="left:19.600px;top:220.6px" width="3" height="3" viewBox="0 0 3 3"><path d="M2.500 0v2.500H0z" fill="#a8a8a8"/></svg>
<svg style="left:5px;top:228.1px" width="16" height="14" viewBox="0 0 16 14"><g transform="translate(8 7) scale(0.92) translate(-8 -7)"><path d="M13 2L8 8" fill="none" stroke="#dedede" stroke-width="2.200" stroke-linecap="round"/><path d="M7.500 8c-2 0-2.500 2-3.500 4 2.500.3 4.500-.5 5-2.500z" fill="#dedede"/><path d="M2 5.500a4 4 0 0 1 6-3" fill="none" stroke="#dedede" stroke-width="1"/><path d="M1 3.500l1 2.500 2.300-1" fill="none" stroke="#dedede" stroke-width="1"/></g></svg>
<svg style="left:19.600px;top:238.7px" width="3" height="3" viewBox="0 0 3 3"><path d="M2.500 0v2.500H0z" fill="#a8a8a8"/></svg>
<svg style="left:5px;top:246.1px" width="16" height="14" viewBox="0 0 16 14"><g transform="translate(8 7) scale(0.92) translate(-8 -7)"><path d="M2.500 8.500l6-6 4.500 3-5.500 6h-3z" fill="none" stroke="#dedede" stroke-width="1.2" stroke-linecap="round" stroke-linejoin="round"/><path d="M5.500 5.500l4.500 3.500 3-3.500-4.500-3z" fill="#dedede"/><path d="M8 12h6" fill="none" stroke="#dedede" stroke-width="1.2" stroke-linecap="round" stroke-linejoin="round"/></g></svg>
<svg style="left:19.600px;top:256.7px" width="3" height="3" viewBox="0 0 3 3"><path d="M2.500 0v2.500H0z" fill="#a8a8a8"/></svg>
<svg style="left:7px;top:265.700px" width="13" height="10" viewBox="0 0 13 10"><defs><linearGradient id="tg" x1="0" y1="0" x2="1" y2="0"><stop offset="0" stop-color="#d8d8d8"/><stop offset="1" stop-color="#3a3a3a"/></linearGradient></defs><rect x="0.500" y="0.500" width="11.500" height="8.800" fill="url(#tg)" stroke="#d0d0d0" stroke-width="1"/></svg>
<svg style="left:20.500px;top:275.500px" width="3" height="3" viewBox="0 0 3 3"><path d="M2.500 0v2.500H0z" fill="#a8a8a8"/></svg>
<svg style="left:5px;top:282.2px" width="16" height="14" viewBox="0 0 16 14"><g transform="translate(8 7) scale(0.92) translate(-8 -7)"><path d="M6.300 2.200C8.500 0.800 12.500 0.800 13.800 2.200c.8 1 .6 3.200-.4 4.800-.7 1.200-1.800 2-2.800 2-.8 0-1.200-.4-1.300-1L5 12.500c-.6.600-1.500.600-2 0-.5-.600-.4-1.300.2-1.900L7.800 6c-1.200.2-2-.3-2.300-1.200-.3-1 .1-2 .8-2.600z" fill="#dedede"/><path d="M9.800 5.200l-1.800 2M11.300 6l-1.500 1.800" stroke="#535353" stroke-width=".6" fill="none"/></g></svg>
<svg style="left:19.600px;top:292.8px" width="3" height="3" viewBox="0 0 3 3"><path d="M2.500 0v2.500H0z" fill="#a8a8a8"/></svg>
<svg style="left:5px;top:300.2px" width="16" height="14" viewBox="0 0 16 14"><g transform="translate(8 7) scale(0.92) translate(-8 -7)"><circle cx="10" cy="4.500" r="3.600" fill="#dedede"/><path d="M7.500 7L3 12" fill="none" stroke="#dedede" stroke-width="1.800" stroke-linecap="round"/></g></svg>
<svg style="left:19.600px;top:310.9px" width="3" height="3" viewBox="0 0 3 3"><path d="M2.500 0v2.500H0z" fill="#a8a8a8"/></svg>
<svg style="left:5px;top:318.3px" width="16" height="14" viewBox="0 0 16 14"><g transform="translate(8 7) scale(0.92) translate(-8 -7)"><path d="M8.500 1.500l4.500 4-2 2.500-1 3.500-6 1.500 1.500-6 3.500-1.200z" fill="none" stroke="#dedede" stroke-width="1.2" stroke-linecap="round" stroke-linejoin="round"/><path d="M4.200 12.800l3.600-3.600" fill="none" stroke="#dedede" stroke-width="1.2" stroke-linecap="round" stroke-linejoin="round"/><circle cx="8.300" cy="8.300" r="1" fill="#dedede"/></g></svg>
<svg style="left:19.600px;top:328.9px" width="3" height="3" viewBox="0 0 3 3"><path d="M2.500 0v2.500H0z" fill="#a8a8a8"/></svg>
<span class="t" style="left:8.5px;top:335.9px;font-size:15px;font-family:'Liberation Serif',serif;font-weight:bold;color:#dedede;transform:scaleX(.92)">T</span>
<svg style="left:20.5px;top:347.9px" width="3" height="3" viewBox="0 0 3 3"><path d="M2.5 0v2.5H0z" fill="#a8a8a8"/></svg>
<svg style="left:5px;top:354.4px" width="16" height="14" viewBox="0 0 16 14"><g transform="translate(8 7) scale(0.92) translate(-8 -7)"><path d="M5 1l7 7.500H8.500l2 4-1.800.8-1.900-4L5 11.500z" fill="#dedede"/></g></svg>
<svg style="left:19.600px;top:365.0px" width="3" height="3" viewBox="0 0 3 3"><path d="M2.500 0v2.500H0z" fill="#a8a8a8"/></svg>
<svg style="left:5px;top:372.5px" width="16" height="14" viewBox="0 0 16 14"><g transform="translate(8 7) scale(0.92) translate(-8 -7)"><rect x="2.500" y="2" width="11.500" height="10" rx="2.500" fill="#7a7a7a" stroke="#dedede" stroke-width="1.200"/></g></svg>
<svg style="left:19.600px;top:383.1px" width="3" height="3" viewBox="0 0 3 3"><path d="M2.500 0v2.500H0z" fill="#a8a8a8"/></svg>
<svg style="left:6.6px;top:390.5px" width="16" height="14" viewBox="0 0 16 14"><g transform="translate(8 7) scale(0.92) translate(-8 -7)"><path d="M5.600 12.800C4.300 11 3.200 9.400 2.400 7.700c-.3-.8.700-1.400 1.400-.7l1.500 1.700V3.500a.8.800 0 0 1 1.600 0v3V2a.8.800 0 0 1 1.600 0v4.400V2.300a.8.800 0 0 1 1.600 0v4.500V3.700a.8.800 0 0 1 1.600 0V9c0 1.800-.5 2.800-1.100 3.800z" fill="#dedede"/><path d="M6.900 3.600v3.400M8.500 2.500v4.200M10.100 3v4" stroke="#535353" stroke-width=".45" fill="none"/></g></svg>
<svg style="left:19.600px;top:401.1px" width="3" height="3" viewBox="0 0 3 3"><path d="M2.500 0v2.500H0z" fill="#a8a8a8"/></svg>
<svg style="left:5px;top:408.5px" width="16" height="14" viewBox="0 0 16 14"><g transform="translate(8 7) scale(0.92) translate(-8 -7)"><circle cx="6.500" cy="5.500" r="4.200" fill="none" stroke="#dedede" stroke-width="1.2" stroke-linecap="round" stroke-linejoin="round"/><path d="M9.800 8.800l3.700 3.700" fill="none" stroke="#dedede" stroke-width="1.800" stroke-linecap="round"/></g></svg>
<svg style="left:5px;top:426.6px" width="16" height="14" viewBox="0 0 16 14"><g transform="translate(8 7) scale(0.92) translate(-8 -7)"><circle cx="4" cy="7" r="1.300" fill="#dedede"/><circle cx="8" cy="7" r="1.300" fill="#dedede"/><circle cx="12" cy="7" r="1.300" fill="#dedede"/></g></svg>
<svg style="left:19.600px;top:437.2px" width="3" height="3" viewBox="0 0 3 3"><path d="M2.500 0v2.500H0z" fill="#a8a8a8"/></svg>
<div class="a" style="left:3px;top:447px;width:5px;height:5px;background:#111;border:1px solid #e0e0e0"></div>
<div class="a" style="left:6px;top:450px;width:5px;height:5px;background:#fff;border:1px solid #222"></div>
<svg style="left:15px;top:445px;" width="9" height="10" viewBox="0 0 9 10"><path d="M1.500 2.500h4.500v5" fill="none" stroke="#dedede" stroke-width="1.100"/><path d="M0 2.500l2.500-2v4zM6 9.500l-2-2.500h4z" fill="#dedede"/></svg>
<div class="a" style="left:10.3px;top:465.2px;width:12.8px;height:12.5px;background:#ff0000;border:1px solid #d0d0d0"></div>
<div class="a" style="left:3px;top:458px;width:13.4px;height:12.8px;background:#000;border:1px solid #d0d0d0"></div>
<svg style="left:6.7px;top:485.6px;" width="13" height="10" viewBox="0 0 13 10"><rect x="0.5" y="0.5" width="11.5" height="8.6" fill="none" stroke="#d0d0d0"/><circle cx="6.2" cy="4.8" r="2.6" fill="#6a6a6a" stroke="#a0a0a0" stroke-width=".7" stroke-dasharray="1.2 0.8"/></svg>
<svg style="left:6.7px;top:504px;" width="13" height="10" viewBox="0 0 13 10"><rect x="3.5" y="0.5" width="8.3" height="6" fill="none" stroke="#d0d0d0"/><rect x="0.5" y="2.8" width="8.3" height="6" fill="#535353" stroke="#d0d0d0"/></svg>
<svg style="left:20.5px;top:513.5px" width="3" height="3" viewBox="0 0 3 3"><path d="M2.5 0v2.5H0z" fill="#a8a8a8"/></svg>
<div class="a" style="left:29px;top:44px;width:770px;height:19px;background:#424242;"></div>
<div class="a" style="left:29px;top:44px;width:177px;height:19px;background:#535353;"></div>
<div class="a" style="left:206px;top:44px;width:1px;height:19px;background:#3a3a3a;"></div>
<span class="t" style="left:36.2px;top:48.8px;font-size:9px;color:#eeeeee;transform:scaleX(0.937);">陌鱼社区.jpg @ 23.2% (brush, RGB/8) *</span>
<svg style="left:192px;top:50px;" width="6" height="6" viewBox="0 0 6 6"><path d="M0.800 0.800l4 4M4.800 0.800l-4 4" stroke="#c0c0c0" stroke-width="1" fill="none"/></svg>
<div class="a" style="left:29px;top:63px;width:770px;height:1px;background:#3a3a3a;"></div>
<div class="a" style="left:29px;top:63px;width:768px;height:13px;background:#474747;"></div>
<div class="a" style="left:29px;top:76px;width:12px;height:509px;background:#474747;"></div>
<div class="a" style="left:29px;top:63px;width:770px;height:1px;background:#3d3d3d;"></div>
<div class="a" style="left:41px;top:75px;width:745px;height:2px;background:#1b1b1b;"></div>
<div class="a" style="left:40.2px;top:77px;width:1px;height:508px;background:#646464;"></div>
<div class="a" style="left:29px;top:64px;width:11.5px;height:11.5px;background:#4b4b4b;"></div>
<svg style="left:29px;top:64px;overflow:hidden" width="757" height="12" viewBox="0 0 757 12"><rect x="21.44" y="0.500" width="1" height="11.500" fill="#6c6c6c"/><rect x="29.50" y="10.100000000000001" width="1" height="1.2" fill="#808080"/><rect x="37.57" y="8.8" width="1" height="2.5" fill="#808080"/><rect x="45.63" y="10.100000000000001" width="1" height="1.2" fill="#808080"/><text x="24.54" y="10" font-size="8.300" fill="#a2a2a2" font-family="Liberation Sans, sans-serif" textLength="16.20" lengthAdjust="spacingAndGlyphs">1200</text><rect x="53.70" y="0.500" width="1" height="11.500" fill="#6c6c6c"/><rect x="61.77" y="10.100000000000001" width="1" height="1.2" fill="#808080"/><rect x="69.83" y="8.8" width="1" height="2.5" fill="#808080"/><rect x="77.90" y="10.100000000000001" width="1" height="1.2" fill="#808080"/><text x="56.80" y="10" font-size="8.300" fill="#a2a2a2" font-family="Liberation Sans, sans-serif" textLength="16.20" lengthAdjust="spacingAndGlyphs">1000</text><rect x="85.96" y="0.500" width="1" height="11.500" fill="#6c6c6c"/><rect x="94.03" y="10.100000000000001" width="1" height="1.2" fill="#808080"/><rect x="102.09" y="8.8" width="1" height="2.5" fill="#808080"/><rect x="110.16" y="10.100000000000001" width="1" height="1.2" fill="#808080"/><text x="89.06" y="10" font-size="8.300" fill="#a2a2a2" font-family="Liberation Sans, sans-serif" textLength="12.15" lengthAdjust="spacingAndGlyphs">800</text><rect x="118.22" y="0.500" width="1" height="11.500" fill="#6c6c6c"/><rect x="126.28" y="10.100000000000001" width="1" height="1.2" fill="#808080"/><rect x="134.35" y="8.8" width="1" height="2.5" fill="#808080"/><rect x="142.41" y="10.100000000000001" width="1" height="1.2" fill="#808080"/><text x="121.32" y="10" font-size="8.300" fill="#a2a2a2" font-family="Liberation Sans, sans-serif" textLength="12.15" lengthAdjust="spacingAndGlyphs">600</text><rect x="150.48" y="0.500" width="1" height="11.500" fill="#6c6c6c"/><rect x="158.55" y="10.100000000000001" width="1" height="1.2" fill="#808080"/><rect x="166.61" y="8.8" width="1" height="2.5" fill="#808080"/><rect x="174.68" y="10.100000000000001" width="1" height="1.2" fill="#808080"/><text x="153.58" y="10" font-size="8.300" fill="#a2a2a2" font-family="Liberation Sans, sans-serif" textLength="12.15" lengthAdjust="spacingAndGlyphs">400</text><rect x="182.74" y="0.500" width="1" height="11.500" fill="#6c6c6c"/><rect x="190.81" y="10.100000000000001" width="1" height="1.2" fill="#808080"/><rect x="198.87" y="8.8" width="1" height="2.5" fill="#808080"/><rect x="206.94" y="10.100000000000001" width="1" height="1.2" fill="#808080"/><text x="185.84" y="10" font-size="8.300" fill="#a2a2a2" font-family="Liberation Sans, sans-serif" textLength="12.15" lengthAdjust="spacingAndGlyphs">200</text><rect x="215.00" y="0.500" width="1" height="11.500" fill="#6c6c6c"/><rect x="223.06" y="10.100000000000001" width="1" height="1.2" fill="#808080"/><rect x="231.13" y="8.8" width="1" height="2.5" fill="#808080"/><rect x="239.19" y="10.100000000000001" width="1" height="1.2" fill="#808080"/><text x="218.10" y="10" font-size="8.300" fill="#a2a2a2" font-family="Liberation Sans, sans-serif" textLength="4.05" lengthAdjust="spacingAndGlyphs">0</text><rect x="247.26" y="0.500" width="1" height="11.500" fill="#6c6c6c"/><rect x="255.32" y="10.100000000000001" width="1" height="1.2" fill="#808080"/><rect x="263.39" y="8.8" width="1" height="2.5" fill="#808080"/><rect x="271.45" y="10.100000000000001" width="1" height="1.2" fill="#808080"/><text x="250.36" y="10" font-size="8.300" fill="#a2a2a2" font-family="Liberation Sans, sans-serif" textLength="12.15" lengthAdjust="spacingAndGlyphs">200</text><rect x="279.52" y="0.500" width="1" height="11.500" fill="#6c6c6c"/><rect x="287.58" y="10.100000000000001" width="1" height="1.2" fill="#808080"/><rect x="295.65" y="8.8" width="1" height="2.5" fill="#808080"/><rect x="303.71" y="10.100000000000001" width="1" height="1.2" fill="#808080"/><text x="282.62" y="10" font-size="8.300" fill="#a2a2a2" font-family="Liberation Sans, sans-serif" textLength="12.15" lengthAdjust="spacingAndGlyphs">400</text><rect x="311.78" y="0.500" width="1" height="11.500" fill="#6c6c6c"/><rect x="319.84" y="10.100000000000001" width="1" height="1.2" fill="#808080"/><rect x="327.91" y="8.8" width="1" height="2.5" fill="#808080"/><rect x="335.97" y="10.100000000000001" width="1" height="1.2" fill="#808080"/><text x="314.88" y="10" font-size="8.300" fill="#a2a2a2" font-family="Liberation Sans, sans-serif" textLength="12.15" lengthAdjust="spacingAndGlyphs">600</text><rect x="344.04" y="0.500" width="1" height="11.500" fill="#6c6c6c"/><rect x="352.10" y="10.100000000000001" width="1" height="1.2" fill="#808080"/><rect x="360.17" y="8.8" width="1" height="2.5" fill="#808080"/><rect x="368.23" y="10.100000000000001" width="1" height="1.2" fill="#808080"/><text x="347.14" y="10" font-size="8.300" fill="#a2a2a2" font-family="Liberation Sans, sans-serif" textLength="12.15" lengthAdjust="spacingAndGlyphs">800</text><rect x="376.30" y="0.500" width="1" height="11.500" fill="#6c6c6c"/><rect x="384.36" y="10.100000000000001" width="1" height="1.2" fill="#808080"/><rect x="392.43" y="8.8" width="1" height="2.5" fill="#808080"/><rect x="400.49" y="10.100000000000001" width="1" height="1.2" fill="#808080"/><text x="379.40" y="10" font-size="8.300" fill="#a2a2a2" font-family="Liberation Sans, sans-serif" textLength="16.20" lengthAdjust="spacingAndGlyphs">1000</text><rect x="408.56" y="0.500" width="1" height="11.500" fill="#6c6c6c"/><rect x="416.62" y="10.100000000000001" width="1" height="1.2" fill="#808080"/><rect x="424.69" y="8.8" width="1" height="2.5" fill="#808080"/><rect x="432.75" y="10.100000000000001" width="1" height="1.2" fill="#808080"/><text x="411.66" y="10" font-size="8.300" fill="#a2a2a2" font-family="Liberation Sans, sans-serif" textLength="16.20" lengthAdjust="spacingAndGlyphs">1200</text><rect x="440.82" y="0.500" width="1" height="11.500" fill="#6c6c6c"/><rect x="448.88" y="10.100000000000001" width="1" height="1.2" fill="#808080"/><rect x="456.95" y="8.8" width="1" height="2.5" fill="#808080"/><rect x="465.01" y="10.100000000000001" width="1" height="1.2" fill="#808080"/><text x="443.92" y="10" font-size="8.300" fill="#a2a2a2" font-family="Liberation Sans, sans-serif" textLength="16.20" lengthAdjust="spacingAndGlyphs">1400</text><rect x="473.08" y="0.500" width="1" height="11.500" fill="#6c6c6c"/><rect x="481.14" y="10.100000000000001" width="1" height="1.2" fill="#808080"/><rect x="489.21" y="8.8" width="1" height="2.5" fill="#808080"/><rect x="497.27" y="10.100000000000001" width="1" height="1.2" fill="#808080"/><text x="476.18" y="10" font-size="8.300" fill="#a2a2a2" font-family="Liberation Sans, sans-serif" textLength="16.20" lengthAdjust="spacingAndGlyphs">1600</text><rect x="505.34" y="0.500" width="1" height="11.500" fill="#6c6c6c"/><rect x="513.40" y="10.100000000000001" width="1" height="1.2" fill="#808080"/><rect x="521.47" y="8.8" width="1" height="2.5" fill="#808080"/><rect x="529.53" y="10.100000000000001" width="1" height="1.2" fill="#808080"/><text x="508.44" y="10" font-size="8.300" fill="#a2a2a2" font-family="Liberation Sans, sans-serif" textLength="16.20" lengthAdjust="spacingAndGlyphs">1800</text><rect x="537.60" y="0.500" width="1" height="11.500" fill="#6c6c6c"/><rect x="545.66" y="10.100000000000001" width="1" height="1.2" fill="#808080"/><rect x="553.73" y="8.8" width="1" height="2.5" fill="#808080"/><rect x="561.79" y="10.100000000000001" width="1" height="1.2" fill="#808080"/><text x="540.70" y="10" font-size="8.300" fill="#a2a2a2" font-family="Liberation Sans, sans-serif" textLength="16.20" lengthAdjust="spacingAndGlyphs">2000</text><rect x="569.86" y="0.500" width="1" height="11.500" fill="#6c6c6c"/><rect x="577.92" y="10.100000000000001" width="1" height="1.2" fill="#808080"/><rect x="585.99" y="8.8" width="1" height="2.5" fill="#808080"/><rect x="594.05" y="10.100000000000001" width="1" height="1.2" fill="#808080"/><text x="572.96" y="10" font-size="8.300" fill="#a2a2a2" font-family="Liberation Sans, sans-serif" textLength="16.20" lengthAdjust="spacingAndGlyphs">2200</text><rect x="602.12" y="0.500" width="1" height="11.500" fill="#6c6c6c"/><rect x="610.19" y="10.100000000000001" width="1" height="1.2" fill="#808080"/><rect x="618.25" y="8.8" width="1" height="2.5" fill="#808080"/><rect x="626.32" y="10.100000000000001" width="1" height="1.2" fill="#808080"/><text x="605.22" y="10" font-size="8.300" fill="#a2a2a2" font-family="Liberation Sans, sans-serif" textLength="16.20" lengthAdjust="spacingAndGlyphs">2400</text><rect x="634.38" y="0.500" width="1" height="11.500" fill="#6c6c6c"/><rect x="642.45" y="10.100000000000001" width="1" height="1.2" fill="#808080"/><rect x="650.51" y="8.8" width="1" height="2.5" fill="#808080"/><rect x="658.58" y="10.100000000000001" width="1" height="1.2" fill="#808080"/><text x="637.48" y="10" font-size="8.300" fill="#a2a2a2" font-family="Liberation Sans, sans-serif" textLength="16.20" lengthAdjust="spacingAndGlyphs">2600</text><rect x="666.64" y="0.500" width="1" height="11.500" fill="#6c6c6c"/><rect x="674.71" y="10.100000000000001" width="1" height="1.2" fill="#808080"/><rect x="682.77" y="8.8" width="1" height="2.5" fill="#808080"/><rect x="690.84" y="10.100000000000001" width="1" height="1.2" fill="#808080"/><text x="669.74" y="10" font-size="8.300" fill="#a2a2a2" font-family="Liberation Sans, sans-serif" textLength="16.20" lengthAdjust="spacingAndGlyphs">2800</text><rect x="698.90" y="0.500" width="1" height="11.500" fill="#6c6c6c"/><rect x="706.97" y="10.100000000000001" width="1" height="1.2" fill="#808080"/><rect x="715.03" y="8.8" width="1" height="2.5" fill="#808080"/><rect x="723.10" y="10.100000000000001" width="1" height="1.2" fill="#808080"/><text x="702.00" y="10" font-size="8.300" fill="#a2a2a2" font-family="Liberation Sans, sans-serif" textLength="16.20" lengthAdjust="spacingAndGlyphs">3000</text><rect x="731.16" y="0.500" width="1" height="11.500" fill="#6c6c6c"/><rect x="739.23" y="10.100000000000001" width="1" height="1.2" fill="#808080"/><rect x="747.29" y="8.8" width="1" height="2.5" fill="#808080"/><rect x="755.36" y="10.100000000000001" width="1" height="1.2" fill="#808080"/><text x="734.26" y="10" font-size="8.300" fill="#a2a2a2" font-family="Liberation Sans, sans-serif" textLength="16.20" lengthAdjust="spacingAndGlyphs">3200</text></svg>
<svg style="left:29px;top:76px;overflow:hidden" width="12" height="509" viewBox="0 0 12 509"><rect x="0" y="1.20" width="11.500" height="1" fill="#6c6c6c"/><rect x="9.5" y="8.97" width="2" height="1" fill="#808080"/><rect x="8.0" y="17.03" width="3.5" height="1" fill="#808080"/><rect x="9.5" y="25.09" width="2" height="1" fill="#808080"/><text x="1.500" y="9.30" font-size="7.400" fill="#a2a2a2" font-family="Liberation Sans, sans-serif" textLength="3.900" lengthAdjust="spacingAndGlyphs">0</text><rect x="0" y="33.46" width="11.500" height="1" fill="#6c6c6c"/><rect x="9.5" y="41.22" width="2" height="1" fill="#808080"/><rect x="8.0" y="49.29" width="3.5" height="1" fill="#808080"/><rect x="9.5" y="57.35" width="2" height="1" fill="#808080"/><text x="1.500" y="41.56" font-size="7.400" fill="#a2a2a2" font-family="Liberation Sans, sans-serif" textLength="3.900" lengthAdjust="spacingAndGlyphs">2</text><text x="1.500" y="48.41" font-size="7.400" fill="#a2a2a2" font-family="Liberation Sans, sans-serif" textLength="3.900" lengthAdjust="spacingAndGlyphs">0</text><text x="1.500" y="55.26" font-size="7.400" fill="#a2a2a2" font-family="Liberation Sans, sans-serif" textLength="3.900" lengthAdjust="spacingAndGlyphs">0</text><rect x="0" y="65.72" width="11.500" height="1" fill="#6c6c6c"/><rect x="9.5" y="73.49" width="2" height="1" fill="#808080"/><rect x="8.0" y="81.55" width="3.5" height="1" fill="#808080"/><rect x="9.5" y="89.62" width="2" height="1" fill="#808080"/><text x="1.500" y="73.82" font-size="7.400" fill="#a2a2a2" font-family="Liberation Sans, sans-serif" textLength="3.900" lengthAdjust="spacingAndGlyphs">4</text><text x="1.500" y="80.67" font-size="7.400" fill="#a2a2a2" font-family="Liberation Sans, sans-serif" textLength="3.900" lengthAdjust="spacingAndGlyphs">0</text><text x="1.500" y="87.52" font-size="7.400" fill="#a2a2a2" font-family="Liberation Sans, sans-serif" textLength="3.900" lengthAdjust="spacingAndGlyphs">0</text><rect x="0" y="97.98" width="11.500" height="1" fill="#6c6c6c"/><rect x="9.5" y="105.75" width="2" height="1" fill="#808080"/><rect x="8.0" y="113.81" width="3.5" height="1" fill="#808080"/><rect x="9.5" y="121.88" width="2" height="1" fill="#808080"/><text x="1.500" y="106.08" font-size="7.400" fill="#a2a2a2" font-family="Liberation Sans, sans-serif" textLength="3.900" lengthAdjust="spacingAndGlyphs">6</text><text x="1.500" y="112.93" font-size="7.400" fill="#a2a2a2" font-family="Liberation Sans, sans-serif" textLength="3.900" lengthAdjust="spacingAndGlyphs">0</text><text x="1.500" y="119.78" font-size="7.400" fill="#a2a2a2" font-family="Liberation Sans, sans-serif" textLength="3.900" lengthAdjust="spacingAndGlyphs">0</text><rect x="0" y="130.24" width="11.500" height="1" fill="#6c6c6c"/><rect x="9.5" y="138.00" width="2" height="1" fill="#808080"/><rect x="8.0" y="146.07" width="3.5" height="1" fill="#808080"/><rect x="9.5" y="154.13" width="2" height="1" fill="#808080"/><text x="1.500" y="138.34" font-size="7.400" fill="#a2a2a2" font-family="Liberation Sans, sans-serif" textLength="3.900" lengthAdjust="spacingAndGlyphs">8</text><text x="1.500" y="145.19" font-size="7.400" fill="#a2a2a2" font-family="Liberation Sans, sans-serif" textLength="3.900" lengthAdjust="spacingAndGlyphs">0</text><text x="1.500" y="152.04" font-size="7.400" fill="#a2a2a2" font-family="Liberation Sans, sans-serif" textLength="3.900" lengthAdjust="spacingAndGlyphs">0</text><rect x="0" y="162.50" width="11.500" height="1" fill="#6c6c6c"/><rect x="9.5" y="170.26" width="2" height="1" fill="#808080"/><rect x="8.0" y="178.33" width="3.5" height="1" fill="#808080"/><rect x="9.5" y="186.39" width="2" height="1" fill="#808080"/><text x="1.500" y="170.60" font-size="7.400" fill="#a2a2a2" font-family="Liberation Sans, sans-serif" textLength="3.900" lengthAdjust="spacingAndGlyphs">1</text><text x="1.500" y="177.45" font-size="7.400" fill="#a2a2a2" font-family="Liberation Sans, sans-serif" textLength="3.900" lengthAdjust="spacingAndGlyphs">0</text><text x="1.500" y="184.30" font-size="7.400" fill="#a2a2a2" font-family="Liberation Sans, sans-serif" textLength="3.900" lengthAdjust="spacingAndGlyphs">0</text><text x="1.500" y="191.15" font-size="7.400" fill="#a2a2a2" font-family="Liberation Sans, sans-serif" textLength="3.900" lengthAdjust="spacingAndGlyphs">0</text><rect x="0" y="194.76" width="11.500" height="1" fill="#6c6c6c"/><rect x="9.5" y="202.53" width="2" height="1" fill="#808080"/><rect x="8.0" y="210.59" width="3.5" height="1" fill="#808080"/><rect x="9.5" y="218.66" width="2" height="1" fill="#808080"/><text x="1.500" y="202.86" font-size="7.400" fill="#a2a2a2" font-family="Liberation Sans, sans-serif" textLength="3.900" lengthAdjust="spacingAndGlyphs">1</text><text x="1.500" y="209.71" font-size="7.400" fill="#a2a2a2" font-family="Liberation Sans, sans-serif" textLength="3.900" lengthAdjust="spacingAndGlyphs">2</text><text x="1.500" y="216.56" font-size="7.400" fill="#a2a2a2" font-family="Liberation Sans, sans-serif" textLength="3.900" lengthAdjust="spacingAndGlyphs">0</text><text x="1.500" y="223.41" font-size="7.400" fill="#a2a2a2" font-family="Liberation Sans, sans-serif" textLength="3.900" lengthAdjust="spacingAndGlyphs">0</text><rect x="0" y="227.02" width="11.500" height="1" fill="#6c6c6c"/><rect x="9.5" y="234.79" width="2" height="1" fill="#808080"/><rect x="8.0" y="242.85" width="3.5" height="1" fill="#808080"/><rect x="9.5" y="250.92" width="2" height="1" fill="#808080"/><text x="1.500" y="235.12" font-size="7.400" fill="#a2a2a2" font-family="Liberation Sans, sans-serif" textLength="3.900" lengthAdjust="spacingAndGlyphs">1</text><text x="1.500" y="241.97" font-size="7.400" fill="#a2a2a2" font-family="Liberation Sans, sans-serif" textLength="3.900" lengthAdjust="spacingAndGlyphs">4</text><text x="1.500" y="248.82" font-size="7.400" fill="#a2a2a2" font-family="Liberation Sans, sans-serif" textLength="3.900" lengthAdjust="spacingAndGlyphs">0</text><text x="1.500" y="255.67" font-size="7.400" fill="#a2a2a2" font-family="Liberation Sans, sans-serif" textLength="3.900" lengthAdjust="spacingAndGlyphs">0</text><rect x="0" y="259.28" width="11.500" height="1" fill="#6c6c6c"/><rect x="9.5" y="267.05" width="2" height="1" fill="#808080"/><rect x="8.0" y="275.11" width="3.5" height="1" fill="#808080"/><rect x="9.5" y="283.18" width="2" height="1" fill="#808080"/><text x="1.500" y="267.38" font-size="7.400" fill="#a2a2a2" font-family="Liberation Sans, sans-serif" textLength="3.900" lengthAdjust="spacingAndGlyphs">1</text><text x="1.500" y="274.23" font-size="7.400" fill="#a2a2a2" font-family="Liberation Sans, sans-serif" textLength="3.900" lengthAdjust="spacingAndGlyphs">6</text><text x="1.500" y="281.08" font-size="7.400" fill="#a2a2a2" font-family="Liberation Sans, sans-serif" textLength="3.900" lengthAdjust="spacingAndGlyphs">0</text><text x="1.500" y="287.93" font-size="7.400" fill="#a2a2a2" font-family="Liberation Sans, sans-serif" textLength="3.900" lengthAdjust="spacingAndGlyphs">0</text><rect x="0" y="291.54" width="11.500" height="1" fill="#6c6c6c"/><rect x="9.5" y="299.31" width="2" height="1" fill="#808080"/><rect x="8.0" y="307.37" width="3.5" height="1" fill="#808080"/><rect x="9.5" y="315.44" width="2" height="1" fill="#808080"/><text x="1.500" y="299.64" font-size="7.400" fill="#a2a2a2" font-family="Liberation Sans, sans-serif" textLength="3.900" lengthAdjust="spacingAndGlyphs">1</text><text x="1.500" y="306.49" font-size="7.400" fill="#a2a2a2" font-family="Liberation Sans, sans-serif" textLength="3.900" lengthAdjust="spacingAndGlyphs">8</text><text x="1.500" y="313.34" font-size="7.400" fill="#a2a2a2" font-family="Liberation Sans, sans-serif" textLength="3.900" lengthAdjust="spacingAndGlyphs">0</text><text x="1.500" y="320.19" font-size="7.400" fill="#a2a2a2" font-family="Liberation Sans, sans-serif" textLength="3.900" lengthAdjust="spacingAndGlyphs">0</text><rect x="0" y="323.80" width="11.500" height="1" fill="#6c6c6c"/><rect x="9.5" y="331.56" width="2" height="1" fill="#808080"/><rect x="8.0" y="339.63" width="3.5" height="1" fill="#808080"/><rect x="9.5" y="347.69" width="2" height="1" fill="#808080"/><text x="1.500" y="331.90" font-size="7.400" fill="#a2a2a2" font-family="Liberation Sans, sans-serif" textLength="3.900" lengthAdjust="spacingAndGlyphs">2</text><text x="1.500" y="338.75" font-size="7.400" fill="#a2a2a2" font-family="Liberation Sans, sans-serif" textLength="3.900" lengthAdjust="spacingAndGlyphs">0</text><text x="1.500" y="345.60" font-size="7.400" fill="#a2a2a2" font-family="Liberation Sans, sans-serif" textLength="3.900" lengthAdjust="spacingAndGlyphs">0</text><text x="1.500" y="352.45" font-size="7.400" fill="#a2a2a2" font-family="Liberation Sans, sans-serif" textLength="3.900" lengthAdjust="spacingAndGlyphs">0</text><rect x="0" y="356.06" width="11.500" height="1" fill="#6c6c6c"/><rect x="9.5" y="363.82" width="2" height="1" fill="#808080"/><rect x="8.0" y="371.89" width="3.5" height="1" fill="#808080"/><rect x="9.5" y="379.95" width="2" height="1" fill="#808080"/><text x="1.500" y="364.16" font-size="7.400" fill="#a2a2a2" font-family="Liberation Sans, sans-serif" textLength="3.900" lengthAdjust="spacingAndGlyphs">2</text><text x="1.500" y="371.01" font-size="7.400" fill="#a2a2a2" font-family="Liberation Sans, sans-serif" textLength="3.900" lengthAdjust="spacingAndGlyphs">2</text><text x="1.500" y="377.86" font-size="7.400" fill="#a2a2a2" font-family="Liberation Sans, sans-serif" textLength="3.900" lengthAdjust="spacingAndGlyphs">0</text><text x="1.500" y="384.71" font-size="7.400" fill="#a2a2a2" font-family="Liberation Sans, sans-serif" textLength="3.900" lengthAdjust="spacingAndGlyphs">0</text><rect x="0" y="388.32" width="11.500" height="1" fill="#6c6c6c"/><rect x="9.5" y="396.08" width="2" height="1" fill="#808080"/><rect x="8.0" y="404.15" width="3.5" height="1" fill="#808080"/><rect x="9.5" y="412.21" width="2" height="1" fill="#808080"/><text x="1.500" y="396.42" font-size="7.400" fill="#a2a2a2" font-family="Liberation Sans, sans-serif" textLength="3.900" lengthAdjust="spacingAndGlyphs">2</text><text x="1.500" y="403.27" font-size="7.400" fill="#a2a2a2" font-family="Liberation Sans, sans-serif" textLength="3.900" lengthAdjust="spacingAndGlyphs">4</text><text x="1.500" y="410.12" font-size="7.400" fill="#a2a2a2" font-family="Liberation Sans, sans-serif" textLength="3.900" lengthAdjust="spacingAndGlyphs">0</text><text x="1.500" y="416.97" font-size="7.400" fill="#a2a2a2" font-family="Liberation Sans, sans-serif" textLength="3.900" lengthAdjust="spacingAndGlyphs">0</text><rect x="0" y="420.58" width="11.500" height="1" fill="#6c6c6c"/><rect x="9.5" y="428.34" width="2" height="1" fill="#808080"/><rect x="8.0" y="436.41" width="3.5" height="1" fill="#808080"/><rect x="9.5" y="444.48" width="2" height="1" fill="#808080"/><text x="1.500" y="428.68" font-size="7.400" fill="#a2a2a2" font-family="Liberation Sans, sans-serif" textLength="3.900" lengthAdjust="spacingAndGlyphs">2</text><text x="1.500" y="435.53" font-size="7.400" fill="#a2a2a2" font-family="Liberation Sans, sans-serif" textLength="3.900" lengthAdjust="spacingAndGlyphs">6</text><text x="1.500" y="442.38" font-size="7.400" fill="#a2a2a2" font-family="Liberation Sans, sans-serif" textLength="3.900" lengthAdjust="spacingAndGlyphs">0</text><text x="1.500" y="449.23" font-size="7.400" fill="#a2a2a2" font-family="Liberation Sans, sans-serif" textLength="3.900" lengthAdjust="spacingAndGlyphs">0</text><rect x="0" y="452.84" width="11.500" height="1" fill="#6c6c6c"/><rect x="9.5" y="460.61" width="2" height="1" fill="#808080"/><rect x="8.0" y="468.67" width="3.5" height="1" fill="#808080"/><rect x="9.5" y="476.74" width="2" height="1" fill="#808080"/><text x="1.500" y="460.94" font-size="7.400" fill="#a2a2a2" font-family="Liberation Sans, sans-serif" textLength="3.900" lengthAdjust="spacingAndGlyphs">2</text><text x="1.500" y="467.79" font-size="7.400" fill="#a2a2a2" font-family="Liberation Sans, sans-serif" textLength="3.900" lengthAdjust="spacingAndGlyphs">8</text><text x="1.500" y="474.64" font-size="7.400" fill="#a2a2a2" font-family="Liberation Sans, sans-serif" textLength="3.900" lengthAdjust="spacingAndGlyphs">0</text><text x="1.500" y="481.49" font-size="7.400" fill="#a2a2a2" font-family="Liberation Sans, sans-serif" textLength="3.900" lengthAdjust="spacingAndGlyphs">0</text><rect x="0" y="485.10" width="11.500" height="1" fill="#6c6c6c"/><rect x="9.5" y="492.87" width="2" height="1" fill="#808080"/><rect x="8.0" y="500.93" width="3.5" height="1" fill="#808080"/><rect x="9.5" y="509.00" width="2" height="1" fill="#808080"/><text x="1.500" y="493.20" font-size="7.400" fill="#a2a2a2" font-family="Liberation Sans, sans-serif" textLength="3.900" lengthAdjust="spacingAndGlyphs">3</text><text x="1.500" y="500.05" font-size="7.400" fill="#a2a2a2" font-family="Liberation Sans, sans-serif" textLength="3.900" lengthAdjust="spacingAndGlyphs">0</text><text x="1.500" y="506.90" font-size="7.400" fill="#a2a2a2" font-family="Liberation Sans, sans-serif" textLength="3.900" lengthAdjust="spacingAndGlyphs">0</text></svg>
<div class="a" style="left:490px;top:64px;width:1px;height:11px;background:#a0a0a0;"></div>
<div class="a" style="left:29px;top:276px;width:11px;height:1px;background:#9a9a8a;"></div>
<div class="a" style="left:29px;top:585px;width:757px;height:12px;background:#4a4a4a;"></div>
<div class="a" style="left:29px;top:585px;width:757px;height:1px;background:#3c3c3c;"></div>
<div class="a" style="left:29px;top:586px;width:32px;height:11px;background:#454545;"></div>
<span class="t" style="left:31.5px;top:587.3px;font-size:9px;color:#e0e0e0;transform:scaleX(0.868);">23.23%</span>
<span class="t" style="left:89.5px;top:587.3px;font-size:9px;color:#d4d4d4;transform:scaleX(0.857);">Doc: 18.8M/27.7M</span>
<svg style="left:182px;top:588px;" width="5" height="7" viewBox="0 0 5 7"><path d="M1 0.500l3 3-3 3" fill="none" stroke="#b8b8b8" stroke-width="1"/></svg>
<div class="a" style="left:190px;top:586px;width:596px;height:11px;background:#4d4d4d;"></div>
<div class="a" style="left:786px;top:76px;width:12px;height:521px;background:#4d4d4d;"></div>
<div class="a" style="left:786px;top:76px;width:1px;height:521px;background:#3e3e3e;"></div>
<div class="a" style="left:797px;top:52px;width:1px;height:545px;background:#464646;"></div>
<div class="a" style="left:798px;top:52px;width:1px;height:545px;background:#3e3e3e;"></div>
<div class="a" style="left:799px;top:52px;width:1px;height:545px;background:#464646;"></div>
<div class="a" style="left:797px;top:44px;width:3px;height:8px;background:#424242;"></div>
<div class="a" style="left:825px;top:44px;width:2px;height:8px;background:#424242;"></div>
<div class="a" style="left:800px;top:44px;width:25px;height:553px;background:#535353;"></div>
<div class="a" style="left:800px;top:44px;width:27px;height:8px;background:#424242;"></div>
<svg style="left:815px;top:46px;" width="6" height="4" viewBox="0 0 6 4"><path d="M2.300 0L0 2l2.300 2zM5.300 0L3 2l2.300 2z" fill="#c8c8c8"/></svg>
<div class="a" style="left:806px;top:55px;width:13px;height:2px;background:#474747;"></div>
<svg style="left:809px;top:63.8px;" width="10" height="10" viewBox="0 0 10 10"><path d="M0 0l9.500 4.900L0 9.800z" fill="#e4e4e4"/></svg>
<div class="a" style="left:800px;top:80px;width:27px;height:1px;background:#3e3e3e;"></div>
<div class="a" style="left:825px;top:52px;width:2px;height:545px;background:#3e3e3e;"></div>
<div class="a" style="left:827px;top:44px;width:173px;height:553px;background:#535353;"></div>
<div class="a" style="left:827px;top:44px;width:173px;height:8px;background:#424242;"></div>
<svg style="left:990px;top:46px;" width="6" height="4" viewBox="0 0 6 4"><path d="M0 0l2.300 2-2.300 2zM3 0l2.300 2-2.300 2z" fill="#c8c8c8"/></svg>
<div class="a" style="left:827px;top:52px;width:173px;height:19.6px;background:#424242;"></div>
<div class="a" style="left:827px;top:52px;width:43px;height:20px;background:#535353;"></div>
<div class="a" style="left:870px;top:52px;width:1px;height:19.6px;background:#3a3a3a;"></div>
<span class="t" style="left:833.5px;top:57px;font-size:9px;color:#f0f0f0;transform:scaleX(0.828);font-weight:bold">Renamy</span>
<svg style="left:988.2px;top:59.4px;" width="7" height="5" viewBox="0 0 7 5"><rect x="0" y="0" width="6.8" height="1.3" fill="#a2a2a2"/><rect x="0" y="1.8" width="6.8" height="1.3" fill="#a2a2a2"/><rect x="0" y="3.600" width="6.8" height="1.3" fill="#a2a2a2"/></svg>
<div class="a" style="left:830.4px;top:76.4px;width:165.8px;height:20px;background:#3f3f3f;border:1px solid #393939;border-radius:2.5px"></div>
<span class="t" style="left:835.3px;top:81.3px;font-size:9px;color:#666;transform:scaleX(0.935);">重命名图层</span>
<svg style="left:981.5px;top:82px;" width="10" height="10" viewBox="0 0 10 10"><circle cx="5.3" cy="3.8" r="2.800" fill="none" stroke="#7c7c7c" stroke-width="1.2"/><path d="M3.4 6L1 8.500" stroke="#7c7c7c" stroke-width="1.3" fill="none"/></svg>
<div class="a" style="left:827px;top:102px;width:173px;height:96px;background:#3c3c3c;"></div>
<div class="a" style="left:827px;top:198px;width:173px;height:14px;background:#545454;"></div>
<div class="a" style="left:827px;top:211px;width:173px;height:2px;background:#3b3b3b;"></div>
<div class="a" style="left:868px;top:199px;width:18px;height:12px;background:#1c1c1c;"></div>
<svg style="left:872px;top:200px;" width="10" height="10" viewBox="0 0 10 10"><path d="M5 0.500v9M3.500 0.500h3M3.500 9.500h3M0.800 3h3.200M0.800 7h3.200M0.800 3v4M6 3h3.200v4H6" fill="none" stroke="#f0f0f0" stroke-width="1"/></svg>
<svg style="left:889px;top:201px;" width="10" height="8" viewBox="0 0 10 8"><path d="M0.500 4h3M5 4h4M6.500 1l3 3-3 3" fill="none" stroke="#e0e0e0" stroke-width="1.100"/></svg>
<svg style="left:907px;top:201px;" width="10" height="8" viewBox="0 0 10 8"><path d="M0.500 2.500h5M0.500 5.500h5M6.500 0.800l3 3.200-3 3.200" fill="none" stroke="#e0e0e0" stroke-width="1.100"/></svg>
<svg style="left:926px;top:200px;" width="10" height="10" viewBox="0 0 10 10"><circle cx="5" cy="5" r="2.600" fill="none" stroke="#e0e0e0" stroke-width="1.300"/><path d="M5 0.500v1.500M5 8v1.500M1 2.800l1.300.8M7.700 6.400l1.300.8M1 7.200l1.300-.8M7.700 3.600l1.300-.8" stroke="#e0e0e0" stroke-width="1.300" fill="none"/></svg>
<svg style="left:945px;top:200.500px" width="9" height="9" viewBox="0 0 9 9"><circle cx="4.500" cy="4.500" r="4.200" fill="#d8d8d8"/><text x="4.500" y="7" font-size="6.500" font-weight="bold" text-anchor="middle" fill="#545454" font-family="Liberation Sans, sans-serif">?</text></svg>
<svg style="left:990px;top:203px;" width="8" height="8" viewBox="0 0 8 8"><path d="M8 0v8H0z" fill="#444"/></svg>
<div class="a" style="left:827px;top:213px;width:173px;height:20px;background:#424242;"></div>
<div class="a" style="left:827px;top:213px;width:37px;height:21px;background:#535353;"></div>
<div class="a" style="left:864px;top:213px;width:1px;height:20px;background:#3a3a3a;"></div>
<div class="a" style="left:902px;top:213px;width:1px;height:20px;background:#3a3a3a;"></div>
<div class="a" style="left:950px;top:213px;width:1px;height:20px;background:#3a3a3a;"></div>
<span class="t" style="left:833.5px;top:218.5px;font-size:9px;color:#f0f0f0;transform:scaleX(0.793);font-weight:bold">Layers</span>
<span class="t" style="left:869.5px;top:218.5px;font-size:9px;color:#a8a8a8;transform:scaleX(0.911);">History</span>
<span class="t" style="left:910px;top:218.5px;font-size:9px;color:#a8a8a8;transform:scaleX(0.868);">Channels</span>
<svg style="left:988.2px;top:220.6px;" width="7" height="5" viewBox="0 0 7 5"><rect x="0" y="0" width="6.8" height="1.3" fill="#a2a2a2"/><rect x="0" y="1.8" width="6.8" height="1.3" fill="#a2a2a2"/><rect x="0" y="3.600" width="6.8" height="1.3" fill="#a2a2a2"/></svg>
<div class="a" style="left:830px;top:238.5px;width:68px;height:13px;background:#434343;border:1px solid #484848;border-radius:2px"></div>
<svg style="left:835px;top:241px;" width="8" height="8" viewBox="0 0 8 8"><circle cx="4.800" cy="3" r="2.400" fill="none" stroke="#d0d0d0" stroke-width="1"/><path d="M3 5L0.800 7.500" stroke="#d0d0d0" stroke-width="1.100"/></svg>
<span class="t" style="left:845px;top:241px;font-size:9px;color:#e0e0e0;transform:scaleX(0.890);">Kind</span>
<svg style="left:890px;top:243px;" width="6" height="4" viewBox="0 0 6 4"><path d="M0.500 0.500l2.200 2.200 2.200-2.200" class="ic"/></svg>
<svg style="left:905px;top:241.3px;" width="10" height="8" viewBox="0 0 10 8"><rect x="0.500" y="0.500" width="8.300" height="6.300" fill="none" stroke="#d0d0d0"/><path d="M1.500 6l2-2.500 1.500 1.500 1.500-2 1.500 3z" fill="#d0d0d0"/></svg>
<svg style="left:922.5px;top:241.2px;" width="9" height="9" viewBox="0 0 9 9"><circle cx="4.500" cy="4.500" r="3.600" fill="none" stroke="#d0d0d0"/><path d="M1.800 7.200A3.800 3.800 0 0 1 7.200 1.800z" fill="#d0d0d0"/></svg>
<span class="t" style="left:940px;top:240.6px;font-size:10px;font-family:'Liberation Serif',serif;font-weight:bold;color:#dcdcdc">T</span>
<svg style="left:955.5px;top:241.2px;transform:scale(.9)" width="9" height="9" viewBox="0 0 9 9"><rect x="1.500" y="1.500" width="6" height="6" fill="none" stroke="#d0d0d0"/><rect x="0" y="0" width="2.400" height="2.400" fill="#d0d0d0"/><rect x="6.600" y="0" width="2.400" height="2.400" fill="#d0d0d0"/><rect x="0" y="6.600" width="2.400" height="2.400" fill="#d0d0d0"/><rect x="6.600" y="6.600" width="2.400" height="2.400" fill="#d0d0d0"/></svg>
<svg style="left:972.5px;top:241px;transform:scale(.9)" width="9" height="10" viewBox="0 0 9 10"><path d="M2.500 0.500h3.500l2.500 2.500v5.500h-6z" fill="none" stroke="#d0d0d0"/><rect x="0.500" y="5" width="4" height="4.500" fill="#d0d0d0"/></svg>
<div class="a" style="left:990px;top:241px;width:6px;height:11px;background:#3e3e3e;border-radius:3px"></div>
<div class="a" style="left:990px;top:240px;width:6px;height:6px;background:#e8e8e8;border-radius:3px"></div>
<div class="a" style="left:827px;top:254px;width:173px;height:1px;background:#444;"></div>
<div class="a" style="left:830px;top:257px;width:93px;height:13px;background:#434343;border:1px solid #484848;border-radius:2px"></div>
<span class="t" style="left:835.5px;top:259.5px;font-size:9px;color:#e0e0e0;transform:scaleX(0.890);">Normal</span>
<svg style="left:915px;top:262px;" width="6" height="4" viewBox="0 0 6 4"><path d="M0.500 0.500l2.200 2.200 2.200-2.200" class="ic"/></svg>
<span class="t" style="left:926px;top:259.5px;font-size:9px;color:#c8c8c8;transform:scaleX(0.890);">Opacity:</span>
<div class="a" style="left:958.5px;top:257px;width:27px;height:13px;background:#434343;border:1px solid #484848;border-radius:2px 0 0 2px"></div>
<span class="t" style="left:961px;top:259.5px;font-size:9px;color:#e0e0e0;transform:scaleX(0.890);">100%</span>
<div class="a" style="left:986px;top:257px;width:10.5px;height:13px;background:#464646;border:1px solid #444;border-radius:0 2px 2px 0"></div>
<svg style="left:988.5px;top:262px;" width="6" height="4" viewBox="0 0 6 4"><path d="M0.500 0.500l2.200 2.200 2.200-2.200" class="ic"/></svg>
<div class="a" style="left:827px;top:273px;width:173px;height:1px;background:#444;"></div>
<span class="t" style="left:831px;top:278.5px;font-size:9px;color:#c8c8c8;transform:scaleX(0.890);">Lock:</span>
<svg style="left:856px;top:278.6px;transform:scale(.9)" width="9" height="9" viewBox="0 0 9 9"><rect x="0.500" y="0.500" width="8" height="8" fill="none" stroke="#d8d8d8" stroke-width="1"/><path d="M1 1h2.300v2.300H1zM5.600 1H8v2.300H5.600zM3.300 3.300h2.300v2.300H3.300zM1 5.600h2.300V8H1zM5.600 5.600H8V8H5.600z" fill="#d8d8d8"/></svg>
<svg style="left:870.5px;top:278.3px;transform:scale(.9)" width="10" height="10" viewBox="0 0 10 10"><path d="M9 1L5 5.500" fill="none" stroke="#d8d8d8" stroke-width="1.700" stroke-linecap="round"/><path d="M4.500 5.500c-1.500 0-2 1.500-3 3.300 2 .3 3.700-.3 4.200-2z" fill="#d8d8d8"/></svg>
<svg style="left:886px;top:278.3px;transform:scale(.9)" width="10" height="10" viewBox="0 0 10 10"><path d="M5 0L3.200 2h1.300v2.500H2V3.200L0 5l2 1.800V5.500h2.500V8H3.200L5 10l1.800-2H5.500V5.500H8v1.300L10 5 8 3.200v1.300H5.500V2h1.300z" fill="#d8d8d8"/></svg>
<svg style="left:901.5px;top:278.3px;transform:scale(.9)" width="10" height="10" viewBox="0 0 10 10"><path d="M2.500 0.500v7h7M0.500 2.500h7v7" fill="none" stroke="#d8d8d8" stroke-width="1"/><path d="M8 0.500l1.500 1.500" stroke="#d8d8d8" stroke-width=".8"/></svg>
<svg style="left:918px;top:278.3px;transform:scale(.9)" width="8" height="10" viewBox="0 0 8 10"><rect x="0.500" y="4" width="7" height="5.500" rx=".5" fill="#d8d8d8"/><path d="M2 4V2.500a2 2 0 0 1 4 0V4" fill="none" stroke="#d8d8d8" stroke-width="1.100"/></svg>
<span class="t" style="left:943.5px;top:278.5px;font-size:9px;color:#c8c8c8;transform:scaleX(0.890);">Fill:</span>
<div class="a" style="left:958.5px;top:276px;width:27px;height:13.5px;background:#434343;border:1px solid #484848;border-radius:2px 0 0 2px"></div>
<span class="t" style="left:961px;top:278.5px;font-size:9px;color:#e0e0e0;transform:scaleX(0.890);">100%</span>
<div class="a" style="left:986px;top:276px;width:10.5px;height:13.5px;background:#464646;border:1px solid #444;border-radius:0 2px 2px 0"></div>
<svg style="left:988.5px;top:281px;" width="6" height="4" viewBox="0 0 6 4"><path d="M0.500 0.500l2.200 2.200 2.200-2.200" class="ic"/></svg>
<div class="a" style="left:827px;top:292px;width:162px;height:287px;background:#4b4b4b;"></div>
<div class="a" style="left:989px;top:292px;width:11px;height:286px;background:#4f4f4f;"></div>
<div class="a" style="left:989px;top:292px;width:1px;height:286px;background:#444;"></div>
<div class="a" style="left:827px;top:293px;width:162px;height:27px;background:#535353;"></div>
<div class="a" style="left:849px;top:293px;width:140px;height:27px;background:#6a6a6a;"></div>
<div class="a" style="left:827px;top:320px;width:162px;height:1px;background:#454545;"></div>
<div class="a" style="left:827px;top:321px;width:162px;height:26px;background:#535353;"></div>
<div class="a" style="left:827px;top:347px;width:162px;height:1px;background:#454545;"></div>
<div class="a" style="left:848.5px;top:293px;width:1px;height:54px;background:#484848;"></div>
<svg style="left:833px;top:303.5px;" width="10" height="7" viewBox="0 0 10 7"><path d="M0.3 3.5C1.800 1.200 3.400 0.300 5 0.300S8.200 1.200 9.700 3.500C8.200 5.800 6.600 6.700 5 6.700S1.800 5.800 0.300 3.500z" fill="#e6e6e6"/><circle cx="5.200" cy="3.400" r="1.750" fill="#4e4e4e"/><circle cx="4.600" cy="2.800" r="0.600" fill="#bdbdbd"/></svg>
<svg style="left:833px;top:330.5px;" width="10" height="7" viewBox="0 0 10 7"><path d="M0.3 3.5C1.800 1.200 3.400 0.300 5 0.300S8.200 1.200 9.700 3.500C8.200 5.800 6.600 6.700 5 6.700S1.800 5.800 0.300 3.500z" fill="#e6e6e6"/><circle cx="5.200" cy="3.400" r="1.750" fill="#4e4e4e"/><circle cx="4.600" cy="2.800" r="0.600" fill="#bdbdbd"/></svg>
<svg style="left:849.5px;top:294px;" width="18" height="25" viewBox="0 0 18 25"><defs><pattern id="chk" width="4" height="4" patternUnits="userSpaceOnUse"><rect width="4" height="4" fill="#fff"/><rect width="2" height="2" fill="#ccc"/><rect x="2" y="2" width="2" height="2" fill="#ccc"/></pattern></defs><path d="M0.500 4V0.500h4M13.500 0.500h4V4M17.500 21v3.500h-4M4.500 24.500h-4V21" fill="none" stroke="#f0f0f0" stroke-width="1"/><rect x="2" y="2" width="14" height="21" fill="url(#chk)" stroke="#222" stroke-width=".6"/><g transform="translate(2,2) scale(0.04136)"><path d="M183.2,110.3 L189.2,109.9 L194.2,110.3 L199.3,111.8 L202.3,112.9 L205.9,116.4 L208.3,119.4 L210.3,123.4 L211.7,128.4 L212.1,133.5 L211.7,137.5 L210.7,142.5 L209.3,146.5 L207.3,149.5 L204.9,151.5 L204.3,155.2 L203.9,158.7 L206.3,161.7 L209.3,162.7 L209.5,165.2 L209.9,167.7 L212.7,170.0 L215.3,172.7 L218.0,176.8 L220.4,180.7 L222.0,185.3 L223.4,189.7 L225.8,193.2 L228.4,195.8 L231.2,198.2 L233.4,200.8 L234.4,203.8 L235.4,206.8 L237.9,210.2 L240.5,214.0 L242.5,217.5 L244.5,221.0 L246.5,223.5 L247.5,229.5 L252.5,233.5 L255.5,239.5 L255.5,243.5 L259.6,247.5 L262.0,252.5 L262.6,258.5 L261.0,262.5 L257.6,265.2 L253.5,266.9 L250.1,266.9 L250.1,264.5 L252.6,261.5 L250.6,258.5 L247.6,253.5 L245.1,248.5 L243.6,244.8 L242.5,239.5 L237.5,235.5 L230.4,232.5 L226.4,227.5 L222.4,222.3 L217.4,216.3 L213.9,213.3 L210.3,209.8 L204.9,203.8 L203.9,209.8 L202.3,216.0 L199.9,223.3 L198.3,235.5 L196.7,247.5 L196.3,257.5 L194.2,265.6 L190.2,272.6 L188.6,279.6 L188.8,285.8 L186.2,280.6 L182.2,273.6 L179.6,271.2 L177.6,275.6 L176.2,283.8 L173.1,291.8 L170.5,299.8 L169.1,309.9 L170.1,313.9 L169.7,319.9 L175.1,324.4 L181.2,330.4 L186.2,337.5 L190.2,345.5 L195.2,355.5 L199.3,363.5 L202.3,370.5 L205.3,375.6 L209.3,378.6 L215.3,381.6 L218.8,385.6 L219.4,391.6 L218.0,399.8 L217.8,407.8 L216.4,415.9 L213.3,422.9 L209.3,427.9 L204.3,429.5 L198.3,428.9 L195.9,425.9 L196.7,419.9 L196.3,411.8 L194.2,409.8 L191.8,415.5 L192.2,407.8 L194.2,400.8 L193.2,395.8 L191.2,389.6 L188.2,385.6 L186.2,380.6 L182.2,373.6 L176.2,365.5 L168.1,355.5 L160.1,345.5 L152.0,335.5 L147.0,329.4 L144.0,323.4 L145.0,324.0 L142.0,315.9 L141.6,305.9 L142.0,293.8 L141.6,279.6 L138.0,287.8 L131.9,297.8 L126.9,307.9 L123.9,313.9 L123.3,317.9 L125.9,326.0 L125.9,325.4 L129.9,333.5 L132.9,341.5 L136.0,349.5 L137.6,357.5 L141.0,365.5 L145.0,371.5 L148.0,377.6 L152.0,381.6 L159.1,384.6 L163.7,388.6 L164.1,392.6 L161.1,399.8 L157.1,405.8 L154.0,411.8 L152.0,419.9 L149.0,425.9 L145.0,428.9 L138.0,429.9 L131.9,429.5 L130.5,426.9 L132.9,422.9 L136.0,415.9 L134.9,407.8 L132.9,399.8 L133.9,394.8 L132.9,389.6 L128.9,382.6 L123.9,373.6 L117.9,363.5 L111.8,351.5 L106.8,341.5 L101.8,331.4 L97.8,323.4 L97.4,321.9 L96.4,314.9 L97.8,301.8 L99.8,289.8 L102.2,277.6 L105.4,270.6 L104.4,266.0 L105.8,261.5 L109.8,260.0 L112.8,253.5 L113.8,245.5 L113.4,235.5 L114.8,228.5 L118.9,219.3 L121.9,213.3 L121.9,209.8 L123.9,197.8 L125.3,183.7 L124.9,171.7 L122.9,168.0 L113.8,168.7 L97.8,170.2 L91.7,169.7 L84.7,167.7 L80.7,163.7 L79.7,157.7 L81.7,149.5 L85.7,143.5 L89.3,140.5 L88.7,136.5 L90.7,133.9 L94.7,133.5 L98.8,131.4 L102.8,131.8 L106.8,134.5 L108.8,140.5 L106.8,145.9 L108.8,145.2 L115.9,142.5 L125.9,140.5 L139.0,138.5 L142.0,135.5 L147.0,136.9 L150.0,138.5 L164.1,137.5 L171.5,137.2 L173.1,131.4 L175.8,122.4 L179.2,114.4Z" fill="#ff0000" stroke="#ff0000" stroke-width="4"/></g></svg>
<svg style="left:851px;top:322px;" width="15" height="23" viewBox="0 0 15 23"><defs><linearGradient id="tb" x1="0" y1="0" x2="0" y2="1"><stop offset="0" stop-color="#9a989d"/><stop offset=".4" stop-color="#d8dade"/><stop offset="1" stop-color="#d0d0d3"/></linearGradient></defs><rect x="0.500" y="0.500" width="14" height="21.500" fill="url(#tb)" stroke="#333" stroke-width=".8"/><g transform="translate(0.500,0.500) scale(0.04136)"><path d="M183.2,110.3 L189.2,109.9 L194.2,110.3 L199.3,111.8 L202.3,112.9 L205.9,116.4 L208.3,119.4 L210.3,123.4 L211.7,128.4 L212.1,133.5 L211.7,137.5 L210.7,142.5 L209.3,146.5 L207.3,149.5 L204.9,151.5 L204.3,155.2 L203.9,158.7 L206.3,161.7 L209.3,162.7 L209.5,165.2 L209.9,167.7 L212.7,170.0 L215.3,172.7 L218.0,176.8 L220.4,180.7 L222.0,185.3 L223.4,189.7 L225.8,193.2 L228.4,195.8 L231.2,198.2 L233.4,200.8 L234.4,203.8 L235.4,206.8 L237.9,210.2 L240.5,214.0 L242.5,217.5 L244.5,221.0 L246.5,223.5 L247.5,229.5 L252.5,233.5 L255.5,239.5 L255.5,243.5 L259.6,247.5 L262.0,252.5 L262.6,258.5 L261.0,262.5 L257.6,265.2 L253.5,266.9 L250.1,266.9 L250.1,264.5 L252.6,261.5 L250.6,258.5 L247.6,253.5 L245.1,248.5 L243.6,244.8 L242.5,239.5 L237.5,235.5 L230.4,232.5 L226.4,227.5 L222.4,222.3 L217.4,216.3 L213.9,213.3 L210.3,209.8 L204.9,203.8 L203.9,209.8 L202.3,216.0 L199.9,223.3 L198.3,235.5 L196.7,247.5 L196.3,257.5 L194.2,265.6 L190.2,272.6 L188.6,279.6 L188.8,285.8 L186.2,280.6 L182.2,273.6 L179.6,271.2 L177.6,275.6 L176.2,283.8 L173.1,291.8 L170.5,299.8 L169.1,309.9 L170.1,313.9 L169.7,319.9 L175.1,324.4 L181.2,330.4 L186.2,337.5 L190.2,345.5 L195.2,355.5 L199.3,363.5 L202.3,370.5 L205.3,375.6 L209.3,378.6 L215.3,381.6 L218.8,385.6 L219.4,391.6 L218.0,399.8 L217.8,407.8 L216.4,415.9 L213.3,422.9 L209.3,427.9 L204.3,429.5 L198.3,428.9 L195.9,425.9 L196.7,419.9 L196.3,411.8 L194.2,409.8 L191.8,415.5 L192.2,407.8 L194.2,400.8 L193.2,395.8 L191.2,389.6 L188.2,385.6 L186.2,380.6 L182.2,373.6 L176.2,365.5 L168.1,355.5 L160.1,345.5 L152.0,335.5 L147.0,329.4 L144.0,323.4 L145.0,324.0 L142.0,315.9 L141.6,305.9 L142.0,293.8 L141.6,279.6 L138.0,287.8 L131.9,297.8 L126.9,307.9 L123.9,313.9 L123.3,317.9 L125.9,326.0 L125.9,325.4 L129.9,333.5 L132.9,341.5 L136.0,349.5 L137.6,357.5 L141.0,365.5 L145.0,371.5 L148.0,377.6 L152.0,381.6 L159.1,384.6 L163.7,388.6 L164.1,392.6 L161.1,399.8 L157.1,405.8 L154.0,411.8 L152.0,419.9 L149.0,425.9 L145.0,428.9 L138.0,429.9 L131.9,429.5 L130.5,426.9 L132.9,422.9 L136.0,415.9 L134.9,407.8 L132.9,399.8 L133.9,394.8 L132.9,389.6 L128.9,382.6 L123.9,373.6 L117.9,363.5 L111.8,351.5 L106.8,341.5 L101.8,331.4 L97.8,323.4 L97.4,321.9 L96.4,314.9 L97.8,301.8 L99.8,289.8 L102.2,277.6 L105.4,270.6 L104.4,266.0 L105.8,261.5 L109.8,260.0 L112.8,253.5 L113.8,245.5 L113.4,235.5 L114.8,228.5 L118.9,219.3 L121.9,213.3 L121.9,209.8 L123.9,197.8 L125.3,183.7 L124.9,171.7 L122.9,168.0 L113.8,168.7 L97.8,170.2 L91.7,169.7 L84.7,167.7 L80.7,163.7 L79.7,157.7 L81.7,149.5 L85.7,143.5 L89.3,140.5 L88.7,136.5 L90.7,133.9 L94.7,133.5 L98.8,131.4 L102.8,131.8 L106.8,134.5 L108.8,140.5 L106.8,145.9 L108.8,145.2 L115.9,142.5 L125.9,140.5 L139.0,138.5 L142.0,135.5 L147.0,136.9 L150.0,138.5 L164.1,137.5 L171.5,137.2 L173.1,131.4 L175.8,122.4 L179.2,114.4Z" fill="#1c2430" stroke="#1c2430" stroke-width="3"/></g></svg>
<span class="t" style="left:873px;top:302.5px;font-size:9px;color:#e4e4e4;transform:scaleX(0.890);">brush</span>
<span class="t" style="left:873px;top:329.5px;font-size:9px;color:#e0e0e0;transform:scaleX(0.890);font-style:italic">Background</span>
<svg style="left:969.5px;top:329px;" width="8" height="10" viewBox="0 0 8 10"><rect x="0.500" y="4" width="7" height="5.500" rx=".5" fill="none" stroke="#d0d0d0"/><path d="M2 4V2.500a2 2 0 0 1 4 0V4" fill="none" stroke="#d0d0d0" stroke-width="1"/><rect x="3.500" y="6" width="1" height="1.500" fill="#d0d0d0"/></svg>
<div class="a" style="left:827px;top:579.5px;width:173px;height:17.5px;background:#535353;"></div>
<div class="a" style="left:827px;top:578.5px;width:173px;height:1px;background:#444;"></div>
<svg style="left:858.5px;top:586.5px;" width="10" height="5" viewBox="0 0 10 5"><rect x="0.500" y="0.500" width="5" height="3.600" rx="1.800" fill="none" stroke="#8a8a8a"/><rect x="4.500" y="0.500" width="5" height="3.600" rx="1.800" fill="none" stroke="#8a8a8a"/></svg>
<span class="t" style="left:878px;top:583px;font-size:10px;color:#e0e0e0;transform:scaleX(1.000);font-style:italic;font-family:'Liberation Serif',serif;font-weight:bold">fx</span>
<svg style="left:896px;top:584px;" width="9.5" height="7.5" viewBox="0 0 9.5 7.5"><rect x="0" y="0" width="9.500" height="7.500" fill="#e0e0e0"/><ellipse cx="4.750" cy="3.750" rx="2.500" ry="2.200" fill="#4a4a4a"/></svg>
<svg style="left:915.5px;top:584.5px;" width="9" height="9" viewBox="0 0 9 9"><circle cx="4.500" cy="4.500" r="3.600" fill="none" stroke="#e0e0e0"/><path d="M1.900 7.100A3.600 3.600 0 0 0 7.100 1.900z" fill="#e0e0e0"/></svg>
<svg style="left:934px;top:584.5px;" width="9.5" height="7.5" viewBox="0 0 9.5 7.5"><path d="M0 0.500h3.800l1 1.200h4.700V7.500H0z" fill="#e0e0e0"/></svg>
<svg style="left:953px;top:584.5px;" width="9" height="8" viewBox="0 0 9 8"><path d="M0.500 0.500h7.500v7h-4.500l-3-3z" fill="none" stroke="#e0e0e0"/><path d="M0.500 4.500h3v3" fill="#e0e0e0" stroke="#e0e0e0" stroke-width=".6"/></svg>
<svg style="left:972px;top:583.5px;" width="8" height="10" viewBox="0 0 8 10"><path d="M1 2.500h6v6.500H1z" fill="#9a9a9a" stroke="#e0e0e0"/><path d="M0 2.500h8M3 1h2" stroke="#e0e0e0" fill="none"/></svg>
<svg style="left:887.5px;top:594px;" width="3" height="2" viewBox="0 0 3 2"><path d="M0 0h2.600L1.300 1.500z" fill="#ddd"/></svg>
<svg style="left:925px;top:594px;" width="3" height="2" viewBox="0 0 3 2"><path d="M0 0h2.600L1.300 1.500z" fill="#ddd"/></svg>
<svg style="left:760px;top:480px" width="200" height="100" viewBox="0 0 200 100">
<g fill="#fff" opacity="0.7">
<text x="7.800" y="65" font-size="39" font-weight="bold" font-family="Liberation Sans, sans-serif" textLength="59.500" lengthAdjust="spacingAndGlyphs" stroke="#fff" stroke-width="1.300" stroke-linejoin="round">Bai</text>
<ellipse cx="75.600" cy="33" rx="6.500" ry="8.600" transform="rotate(-14 75.600 33)"/>
<ellipse cx="88" cy="19.500" rx="6.200" ry="8.600" transform="rotate(-4 88 19.500)"/>
<ellipse cx="104.200" cy="20.200" rx="6.300" ry="8.600" transform="rotate(6 104.200 20.200)"/>
<ellipse cx="114.600" cy="36" rx="6.300" ry="8.600" transform="rotate(20 114.600 36)"/>
<path d="M95 33.500c6 0 9.500 5 13 9 5 5 10 8.500 9 15-1 6.500-7.500 9-13 8-4-.7-6-1-9-1s-5.500.3-9.500 1c-6 1-12-1.500-13-8-1-6.500 3.500-10 8.500-15 4-4 7.500-9 14-9z"/>
<text x="123.600" y="63.500" font-size="30" font-weight="bold" font-family="Noto Sans CJK SC, sans-serif" textLength="59" lengthAdjust="spacingAndGlyphs" stroke="#fff" stroke-width="0.500">经验</text>
<text x="8.800" y="88.600" font-size="20.500" font-family="Liberation Sans, sans-serif" textLength="176" lengthAdjust="spacingAndGlyphs">jingyan.baidu.com</text>
</g>
<text x="79.600" y="62" font-size="26" font-weight="bold" font-family="Liberation Sans, sans-serif" fill="#4e4e4e" stroke="#4e4e4e" stroke-width="0.900" textLength="28.500" lengthAdjust="spacingAndGlyphs">du</text>
</svg>
</div></body></html>
